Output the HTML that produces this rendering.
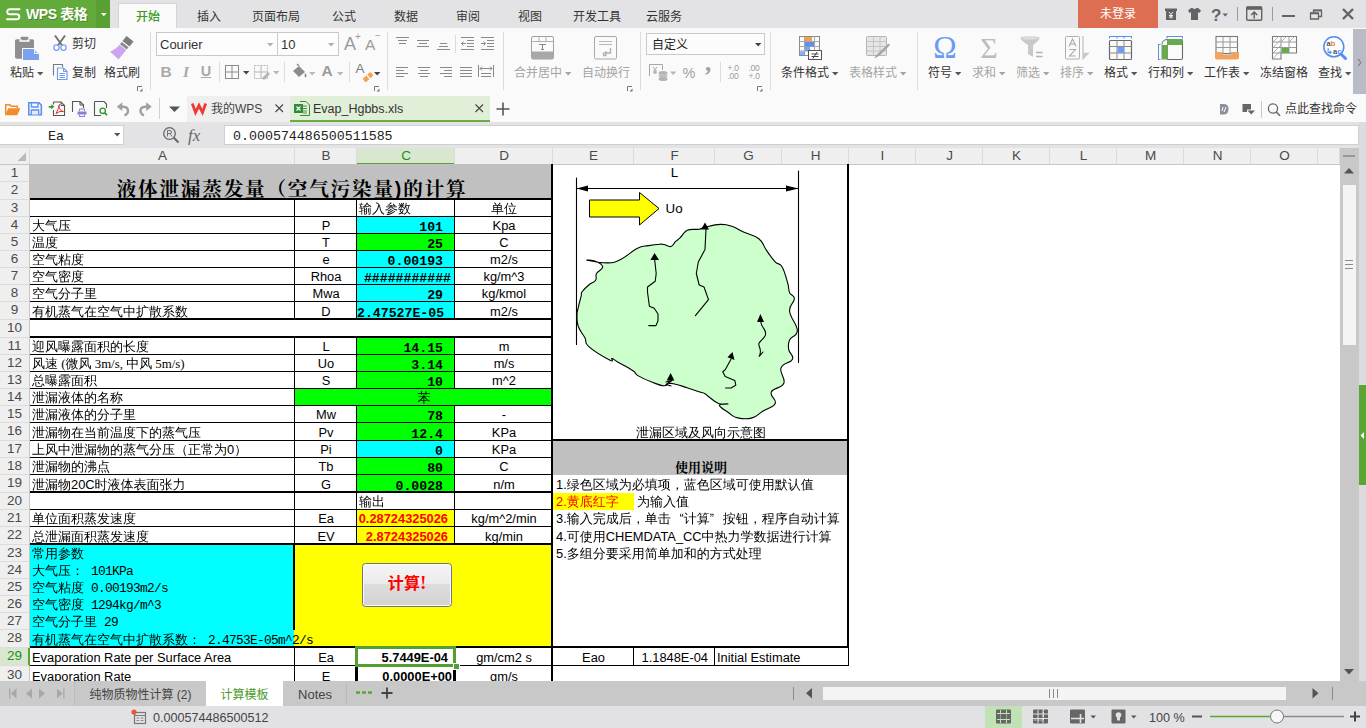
<!DOCTYPE html>
<html lang="zh"><head><meta charset="utf-8"><title>WPS 表格 - Evap_Hgbbs.xls</title>
<style>
html,body{margin:0;padding:0;}
body{width:1366px;height:728px;position:relative;overflow:hidden;background:#fff;font-family:"Liberation Sans","Noto Sans CJK SC",sans-serif;font-size:13px;color:#333;}
div,svg{position:absolute;box-sizing:border-box;}
svg{overflow:visible;}
.t{white-space:nowrap;}
</style></head><body>

<div style="left:0px;top:0px;width:1366px;height:28px;background:#e3e3e5;"></div>
<div style="left:0px;top:0px;width:96px;height:28px;background:#62ab3a;"></div>
<div style="left:96px;top:0px;width:14px;height:28px;background:#59a034;"></div>
<svg style="left:6px;top:8px" width="15" height="13" viewBox="0 0 15 13"><path d="M13.500 1.200H3.800Q1.200 1.200 1.200 3.700Q1.200 6.200 3.800 6.200H10.800Q13.300 6.200 13.300 8.700Q13.300 11.200 10.800 11.200H1" fill="none" stroke="#fff" stroke-width="1.900" stroke-linecap="round"/></svg>
<div style="left:26px;top:0px;width:70px;height:28px;line-height:28px;font-size:14px;color:#fff;text-align:left;white-space:nowrap;font-family:'Liberation Sans','Noto Sans CJK SC',sans-serif;font-weight:bold;letter-spacing:-0.4px;text-shadow:1px 1px 0 rgba(0,0,0,.22);">WPS 表格</div>
<svg style="left:101px;top:13px" width="6" height="4"><path d="M0 0H5.600L2.800 3.300Z" fill="#fff"/></svg>
<div style="left:118px;top:3px;width:59px;height:25px;background:#fafafa;border:1px solid #d4d4d6;border-bottom:none;"></div>
<div style="left:108px;top:4px;width:80px;height:26px;line-height:27px;font-size:12px;color:#3a9a1c;text-align:center;white-space:nowrap;font-family:'Liberation Sans','Noto Sans CJK SC',sans-serif;font-weight:500;">开始</div>
<div style="left:169px;top:4px;width:80px;height:26px;line-height:27px;font-size:12px;color:#333;text-align:center;white-space:nowrap;font-family:'Liberation Sans','Noto Sans CJK SC',sans-serif;">插入</div>
<div style="left:236px;top:4px;width:80px;height:26px;line-height:27px;font-size:12px;color:#333;text-align:center;white-space:nowrap;font-family:'Liberation Sans','Noto Sans CJK SC',sans-serif;">页面布局</div>
<div style="left:304px;top:4px;width:80px;height:26px;line-height:27px;font-size:12px;color:#333;text-align:center;white-space:nowrap;font-family:'Liberation Sans','Noto Sans CJK SC',sans-serif;">公式</div>
<div style="left:366px;top:4px;width:80px;height:26px;line-height:27px;font-size:12px;color:#333;text-align:center;white-space:nowrap;font-family:'Liberation Sans','Noto Sans CJK SC',sans-serif;">数据</div>
<div style="left:428px;top:4px;width:80px;height:26px;line-height:27px;font-size:12px;color:#333;text-align:center;white-space:nowrap;font-family:'Liberation Sans','Noto Sans CJK SC',sans-serif;">审阅</div>
<div style="left:490px;top:4px;width:80px;height:26px;line-height:27px;font-size:12px;color:#333;text-align:center;white-space:nowrap;font-family:'Liberation Sans','Noto Sans CJK SC',sans-serif;">视图</div>
<div style="left:557px;top:4px;width:80px;height:26px;line-height:27px;font-size:12px;color:#333;text-align:center;white-space:nowrap;font-family:'Liberation Sans','Noto Sans CJK SC',sans-serif;">开发工具</div>
<div style="left:624px;top:4px;width:80px;height:26px;line-height:27px;font-size:12px;color:#333;text-align:center;white-space:nowrap;font-family:'Liberation Sans','Noto Sans CJK SC',sans-serif;">云服务</div>
<div style="left:1078px;top:0px;width:80px;height:28px;background:#de6e51;"></div>
<div style="left:1078px;top:0px;width:80px;height:28px;line-height:28px;font-size:12px;color:#fff;text-align:center;white-space:nowrap;font-family:'Liberation Sans','Noto Sans CJK SC',sans-serif;">未登录</div>
<svg style="left:1160px;top:0" width="206" height="28" viewBox="1160 0 206 28" fill="none" stroke="#636363">
<path d="M1165 8.5H1177V11H1176V20H1166V11H1165Z" fill="#636363" stroke="none"/>
<path d="M1169 12L1171 14.5L1173 12M1171 14.5V18.5M1169 15.5H1173M1169 17H1173" stroke="#fff" stroke-width="0.9"/>
<path d="M1191 8L1188 10.5L1189.5 13L1191 12V20H1198V12L1199.5 13L1201 10.5L1198 8H1196.5Q1194.5 10 1192.5 8Z" fill="#636363" stroke="none"/>
<text x="1211" y="21" font-family="Liberation Sans,sans-serif" font-size="17" font-weight="bold" fill="#636363" stroke="none">?</text>
<path d="M1222.5 13.5H1228L1225.2 16.5Z" fill="#636363" stroke="none"/>
<path d="M1237.5 7V21M1272.5 7V21" stroke="#9a9a9c" stroke-width="1"/>
<rect x="1246.700" y="7" width="15" height="13.300" rx="1" stroke-width="1.400"/><path d="M1246.500 8.200H1262" stroke-width="3.200"/><path d="M1254.200 18.500V12.500M1251.200 15L1254.200 12L1257.200 15" stroke-width="1.500"/>
<path d="M1282 16H1295" stroke-width="2"/>
<path d="M1310.5 13.5H1318.5V19H1310.5ZM1313.5 13V10.5H1321.5V16.5H1319" stroke-width="1.3"/><path d="M1310 13.2H1319M1313 10.3H1322" stroke-width="1.8"/>
<path d="M1343 9L1353 19M1353 9L1343 19" stroke-width="2.400"/>
</svg>
<div style="left:0px;top:28px;width:1366px;height:94px;background:#fafafa;"></div>
<svg style="left:14px;top:36px" width="26" height="25" viewBox="0 0 26 25">
<path d="M1 4.800Q1 3.200 2.600 3.200H6.500V2Q6.500 0.800 7.700 0.800H13.300Q14.500 0.800 14.500 2V3.200H18.400Q20 3.200 20 4.800V12H8V22.700H2.600Q1 22.700 1 21.100Z" fill="#8f8f8f"/>
<rect x="5.500" y="3.200" width="10" height="2.600" fill="#fafafa"/><rect x="7.500" y="1.600" width="6" height="2.600" fill="#8f8f8f"/>
<path d="M9 13H20L25 18V24H9Z" fill="#7aa2ef"/><path d="M20 13V18H25Z" fill="#fafafa"/><path d="M20.800 14.800V17.200H23.200Z" fill="#7aa2ef"/>
</svg>
<div style="left:0.0px;top:63px;width:44px;height:20px;line-height:20px;font-size:12px;color:#333;text-align:center;white-space:nowrap;font-family:'Liberation Sans','Noto Sans CJK SC',sans-serif;">粘贴</div>
<svg style="left:37.0px;top:72px" width="7" height="4"><path d="M0 0H6.4L3.2 3.6Z" fill="#555"/></svg>
<svg style="left:52px;top:35px" width="16" height="17" viewBox="0 0 16 17" fill="none">
<path d="M3 0.500L10.300 10.800M13 0.500L5.700 10.800" stroke="#707070" stroke-width="1.900"/>
<circle cx="4.500" cy="12.600" r="2.700" stroke="#7aa2ef" stroke-width="1.300"/><circle cx="11.500" cy="12.600" r="2.700" stroke="#7aa2ef" stroke-width="1.300"/></svg>
<div style="left:72px;top:34px;width:30px;height:20px;line-height:20px;font-size:12px;color:#333;text-align:left;white-space:nowrap;font-family:'Liberation Sans','Noto Sans CJK SC',sans-serif;">剪切</div>
<svg style="left:53px;top:64px" width="15" height="17" viewBox="0 0 15 17" fill="none">
<path d="M0.500 11.500V0.500H9.500V3" stroke="#7a7a7a" stroke-width="1.100"/>
<path d="M4.500 4H10.500L14 7.500V15.500H4.500Z" fill="#fff" stroke="#6f9bf0" stroke-width="1.200"/><path d="M10.500 4V7.500H14" stroke="#6f9bf0" stroke-width="1"/><path d="M6.500 9.500H12M6.500 11.500H12M6.500 13.500H12" stroke="#6f9bf0" stroke-width="1"/></svg>
<div style="left:72px;top:63px;width:30px;height:20px;line-height:20px;font-size:12px;color:#333;text-align:left;white-space:nowrap;font-family:'Liberation Sans','Noto Sans CJK SC',sans-serif;">复制</div>
<svg style="left:109px;top:35px" width="26" height="25" viewBox="0 0 26 25">
<path d="M17.5 1L24.5 6.5L20.5 11.5L13.5 6Z" fill="#7c7c7c"/><path d="M12.8 7L19.5 12.3L17.8 14.5L11 9.2Z" fill="#8a8a8a"/>
<path d="M10.5 9.8L17.2 15L9.5 24.5L1 16.5Q6 15 10.5 9.8Z" fill="#cda4ef"/></svg>
<div style="left:94.0px;top:63px;width:56px;height:20px;line-height:20px;font-size:12px;color:#333;text-align:center;white-space:nowrap;font-family:'Liberation Sans','Noto Sans CJK SC',sans-serif;">格式刷</div>
<svg style="left:137px;top:86px" width="6" height="6"><path d="M0.5 5V0.5H5" fill="none" stroke="#777" stroke-width="1"/><path d="M5.5 2.5V5.5H2.5Z" fill="#777"/></svg>
<div style="left:150px;top:32px;width:1px;height:58px;background:#dcdcdc;"></div>
<div style="left:156px;top:32px;width:183px;height:24px;background:#fdfdfd;border:1px solid #c9c9c9;"></div>
<div style="left:277px;top:33px;width:1px;height:22px;background:#c9c9c9;"></div>
<div style="left:160px;top:33px;width:100px;height:23px;line-height:24px;font-size:13px;color:#333;text-align:left;white-space:nowrap;font-family:'Liberation Sans','Noto Sans CJK SC',sans-serif;">Courier</div>
<div style="left:281px;top:33px;width:40px;height:23px;line-height:24px;font-size:13px;color:#333;text-align:left;white-space:nowrap;font-family:'Liberation Sans','Noto Sans CJK SC',sans-serif;">10</div>
<svg style="left:267px;top:43px" width="7" height="4"><path d="M0 0H6.4L3.2 3.6Z" fill="#b0b0b0"/></svg>
<svg style="left:328px;top:43px" width="7" height="4"><path d="M0 0H6.4L3.2 3.6Z" fill="#b0b0b0"/></svg>
<div style="left:344px;top:34px;width:14px;height:20px;line-height:20px;font-size:18px;color:#9a9a9a;text-align:left;white-space:nowrap;font-family:'Liberation Sans','Noto Sans CJK SC',sans-serif;">A</div>
<div style="left:355px;top:32px;width:8px;height:10px;line-height:10px;font-size:10px;color:#9a9a9a;text-align:left;white-space:nowrap;font-family:'Liberation Sans','Noto Sans CJK SC',sans-serif;">+</div>
<div style="left:365px;top:36px;width:14px;height:18px;line-height:18px;font-size:15.5px;color:#9a9a9a;text-align:left;white-space:nowrap;font-family:'Liberation Sans','Noto Sans CJK SC',sans-serif;">A</div>
<div style="left:375px;top:31px;width:8px;height:10px;line-height:10px;font-size:10px;color:#9a9a9a;text-align:left;white-space:nowrap;font-family:'Liberation Sans','Noto Sans CJK SC',sans-serif;">−</div>
<div style="left:159px;top:62px;width:14px;height:20px;line-height:20px;font-size:15.5px;color:#a9a9a9;text-align:center;white-space:nowrap;font-family:'Liberation Sans','Noto Sans CJK SC',sans-serif;font-weight:bold;">B</div>
<div style="left:179px;top:62px;width:14px;height:20px;line-height:20px;font-size:15.5px;color:#a9a9a9;text-align:center;white-space:nowrap;font-family:'Liberation Serif',serif;font-weight:bold;font-style:italic;">I</div>
<div style="left:199px;top:62px;width:14px;height:20px;line-height:18px;font-size:14.5px;color:#a9a9a9;text-align:center;white-space:nowrap;font-family:'Liberation Sans','Noto Sans CJK SC',sans-serif;font-weight:bold;text-decoration:underline;">U</div>
<div style="left:219px;top:62px;width:1px;height:20px;background:#dcdcdc;"></div>
<svg style="left:225px;top:65px" width="60" height="15" viewBox="0 0 60 15" fill="none">
<rect x="0.5" y="0.5" width="13" height="13" stroke="#8c8c8c"/><path d="M7 0.5V13.5M0.5 7H13.5" stroke="#8c8c8c"/>
<path d="M18 6H24.4L21.2 9.6Z" fill="#444"/>
<rect x="29.5" y="0.5" width="13" height="13" stroke="#b4b4b4" stroke-dasharray="2 1"/><path d="M36 0.5V13.5M29.5 7H42.5" stroke="#b4b4b4"/><path d="M37 13L43 7L45 9L39 15Z" fill="#b4b4b4"/>
<path d="M48 6H54.4L51.2 9.6Z" fill="#b8b8b8"/></svg>
<div style="left:284px;top:62px;width:1px;height:20px;background:#dcdcdc;"></div>
<svg style="left:290px;top:63px" width="95" height="20" viewBox="0 0 95 20" fill="none">
<path d="M3 8L9 3L15 9L9 14Z" fill="#8c8c8c"/><path d="M9 3L7 1" stroke="#8c8c8c" stroke-width="1.4"/><path d="M15.5 10Q17.5 13 15.5 14.5Q13.5 13 15.5 10Z" fill="#8c8c8c"/>
<path d="M19 9H25.4L22.2 12.6Z" fill="#b8b8b8"/>
<path d="M47 9H53.4L50.2 12.6Z" fill="#b8b8b8"/>
<path d="M73.500 15L79.500 9.500Q80.500 8.800 81.300 9.700L82.800 11.500Q83.500 12.500 82.600 13.300L76.500 18.800Q75.600 19.500 74.800 18.600L73.300 16.800Q72.600 15.800 73.500 15Z" fill="#f2a356"/><path d="M76.800 12L80 15.800" stroke="#fff" stroke-width="1.200"/>
<path d="M84 9H90.4L87.2 12.6Z" fill="#444"/></svg>
<div style="left:319px;top:61px;width:16px;height:20px;line-height:20px;font-size:15.5px;color:#9a9a9a;text-align:center;white-space:nowrap;font-family:'Liberation Sans','Noto Sans CJK SC',sans-serif;font-weight:bold;">A</div>
<div style="left:349px;top:62px;width:1px;height:20px;background:#dcdcdc;"></div>
<div style="left:353px;top:59px;width:14px;height:20px;line-height:20px;font-size:13.5px;color:#7d7d7d;text-align:center;white-space:nowrap;font-family:'Liberation Sans','Noto Sans CJK SC',sans-serif;">A</div>
<svg style="left:374px;top:86px" width="6" height="6"><path d="M0.5 5V0.5H5" fill="none" stroke="#777" stroke-width="1"/><path d="M5.5 2.5V5.5H2.5Z" fill="#777"/></svg>
<div style="left:387px;top:32px;width:1px;height:58px;background:#dcdcdc;"></div>
<svg style="left:396px;top:37px" width="18" height="14"><path d="M0 0.5H13M2 3.5H11M3 6.5H10" stroke="#8a8a8a" stroke-width="1" fill="none"/></svg>
<svg style="left:417px;top:40px" width="18" height="14"><path d="M0 0.5H12M2 3.5H10M0 6.5H12" stroke="#8a8a8a" stroke-width="1" fill="none"/></svg>
<svg style="left:437px;top:43px" width="18" height="14"><path d="M3 0.5H10M2 3.5H11M0 6.5H13" stroke="#8a8a8a" stroke-width="1" fill="none"/></svg>
<div style="left:455px;top:35px;width:1px;height:18px;background:#dcdcdc;"></div>
<svg style="left:461px;top:37px" width="34" height="14" fill="none" stroke="#8a8a8a">
<path d="M0 0.5H13M6 3.5H13M6 6.5H13M6 9.5H13M0 12.5H13M5 6.5H0.5M2.5 4.5L0.5 6.5L2.5 8.5"/>
<path d="M20 0.5H33M26 3.5H33M26 6.5H33M26 9.5H33M20 12.5H33M20 6.5H24.5M22.5 4.5L24.5 6.5L22.5 8.5"/></svg>
<svg style="left:396px;top:67px" width="18" height="14"><path d="M0 0.5H12M0 3.5H8M0 6.5H12M0 9.5H8" stroke="#8a8a8a" stroke-width="1" fill="none"/></svg>
<svg style="left:418px;top:67px" width="18" height="14"><path d="M0 0.5H12M2 3.5H10M0 6.5H12M2 9.5H10" stroke="#8a8a8a" stroke-width="1" fill="none"/></svg>
<svg style="left:440px;top:67px" width="18" height="14"><path d="M0 0.5H12M4 3.5H12M0 6.5H12M4 9.5H12" stroke="#8a8a8a" stroke-width="1" fill="none"/></svg>
<svg style="left:460px;top:67px" width="18" height="14"><path d="M0 0.5H12M0 3.5H12M0 6.5H12M0 9.5H12" stroke="#8a8a8a" stroke-width="1" fill="none"/></svg>
<svg style="left:478px;top:65px" width="17" height="13" fill="none" stroke="#8a8a8a"><path d="M0.5 0V12M15.5 0V12M2 3.5H14M4 1.5L2 3.5L4 5.5M12 1.5L14 3.5L12 5.5M3 8.5H13M3 11.5H13"/></svg>
<div style="left:503px;top:32px;width:1px;height:58px;background:#dcdcdc;"></div>
<svg style="left:531px;top:36px" width="23" height="24" viewBox="0 0 23 24" fill="none">
<rect x="0.5" y="0.5" width="22" height="22.5" rx="1.5" stroke="#a0a0a0"/><path d="M0.5 5.5H22.5M8 0.5V5.5M15 0.5V5.5" stroke="#b0b0b0"/>
<path d="M0.5 15.5H22.5V21.5Q22.5 23 21 23H2Q0.5 23 0.5 21.5Z" fill="#a8a8a8"/>
<path d="M8 8.5H15M11.5 8.5V13.5M10 13.5H13" stroke="#8a8a8a"/></svg>
<div style="left:504.0px;top:63px;width:68px;height:20px;line-height:20px;font-size:12px;color:#a4a4a4;text-align:center;white-space:nowrap;font-family:'Liberation Sans','Noto Sans CJK SC',sans-serif;">合并居中</div>
<svg style="left:565.0px;top:72px" width="7" height="4"><path d="M0 0H6.4L3.2 3.6Z" fill="#a4a4a4"/></svg>
<svg style="left:594px;top:36px" width="23" height="24" viewBox="0 0 23 24" fill="none">
<rect x="0.5" y="0.5" width="22" height="22.5" rx="1.5" stroke="#a8a8a8"/><path d="M5 5.5H18M5 8.5H18" stroke="#b8b8b8"/>
<path d="M16.5 12V17H9.5M12 15V19.5H9.5V17" stroke="#b0b0b0" stroke-width="1.3"/></svg>
<div style="left:572.0px;top:63px;width:68px;height:20px;line-height:20px;font-size:12px;color:#a4a4a4;text-align:center;white-space:nowrap;font-family:'Liberation Sans','Noto Sans CJK SC',sans-serif;">自动换行</div>
<svg style="left:627px;top:86px" width="6" height="6"><path d="M0.5 5V0.5H5" fill="none" stroke="#777" stroke-width="1"/><path d="M5.5 2.5V5.5H2.5Z" fill="#777"/></svg>
<div style="left:640px;top:32px;width:1px;height:58px;background:#dcdcdc;"></div>
<div style="left:646px;top:33px;width:119px;height:22px;background:#fcfcfc;border:1px solid #c9c9c9;"></div>
<div style="left:652px;top:33px;width:60px;height:22px;line-height:25px;font-size:12px;color:#222;text-align:left;white-space:nowrap;font-family:'Liberation Sans','Noto Sans CJK SC',sans-serif;">自定义</div>
<svg style="left:755px;top:43px" width="7" height="4"><path d="M0 0H6.4L3.2 3.6Z" fill="#444"/></svg>
<svg style="left:649px;top:64px" width="115" height="18" viewBox="0 0 115 18" fill="none">
<path d="M0.5 12V0.5H13.5V6" stroke="#a8a8a8"/><path d="M4 3L6 5.5L8 3M6 5.5V10M4 7H8M4 8.8H8" stroke="#a0a0a0" stroke-width="0.9"/>
<ellipse cx="14" cy="9" rx="4.5" ry="2" fill="#b4b4b4"/><ellipse cx="14" cy="12" rx="4.5" ry="2" fill="#c0c0c0"/><ellipse cx="14" cy="15" rx="4.5" ry="2" fill="#b4b4b4"/>
<path d="M21 7.5H27.4L24.2 11.1Z" fill="#b8b8b8"/>
</svg>
<div style="left:682px;top:63px;width:14px;height:20px;line-height:20px;font-size:14.5px;color:#a0a0a0;text-align:center;white-space:nowrap;font-family:'Liberation Sans','Noto Sans CJK SC',sans-serif;">%</div>
<div style="left:702px;top:51px;width:12px;height:24px;line-height:24px;font-size:25px;color:#a0a0a0;text-align:center;white-space:nowrap;font-family:'Liberation Serif',serif;font-weight:bold;">,</div>
<div style="left:720px;top:62px;width:1px;height:20px;background:#dcdcdc;"></div>
<div style="left:725px;top:63px;width:16px;height:10px;line-height:10px;font-size:8.5px;color:#9a9a9a;text-align:center;white-space:nowrap;font-family:'Liberation Sans','Noto Sans CJK SC',sans-serif;letter-spacing:-0.3px;">+.0</div>
<div style="left:725px;top:71px;width:16px;height:10px;line-height:10px;font-size:8.5px;color:#9a9a9a;text-align:center;white-space:nowrap;font-family:'Liberation Sans','Noto Sans CJK SC',sans-serif;letter-spacing:-0.3px;">.00</div>
<div style="left:746px;top:63px;width:16px;height:10px;line-height:10px;font-size:8.5px;color:#9a9a9a;text-align:center;white-space:nowrap;font-family:'Liberation Sans','Noto Sans CJK SC',sans-serif;letter-spacing:-0.3px;">.00</div>
<div style="left:746px;top:71px;width:16px;height:10px;line-height:10px;font-size:8.5px;color:#9a9a9a;text-align:center;white-space:nowrap;font-family:'Liberation Sans','Noto Sans CJK SC',sans-serif;letter-spacing:-0.3px;">+.0</div>
<svg style="left:757px;top:86px" width="6" height="6"><path d="M0.5 5V0.5H5" fill="none" stroke="#777" stroke-width="1"/><path d="M5.5 2.5V5.5H2.5Z" fill="#777"/></svg>
<div style="left:770px;top:32px;width:1px;height:58px;background:#dcdcdc;"></div>
<svg style="left:799px;top:36px" width="23" height="24" viewBox="0 0 23 24" fill="none">
<rect x="0.5" y="0.5" width="20" height="19" stroke="#8a8a8a"/><path d="M0.5 5.5H20.5M0.5 10.5H20.5M0.5 15H20.5M5.5 0.5V19.5M15.5 0.5V19.5" stroke="#a8a8a8"/>
<rect x="6" y="1" width="7" height="4.5" fill="#f0a050"/><rect x="6" y="6" width="9" height="4.5" fill="#5b8ff0"/><rect x="6" y="11" width="5" height="4" fill="#5b8ff0" opacity=".8"/><rect x="1" y="15.5" width="4.5" height="4" fill="#5b8ff0" opacity=".7"/>
<rect x="9.5" y="14.5" width="13" height="9" fill="#fff" stroke="#555"/><path d="M12.5 18H19.5M12.5 20.5H19.5M18 16L14 22.5" stroke="#444"/></svg>
<div style="left:771.0px;top:63px;width:68px;height:20px;line-height:20px;font-size:12px;color:#333;text-align:center;white-space:nowrap;font-family:'Liberation Sans','Noto Sans CJK SC',sans-serif;">条件格式</div>
<svg style="left:832.0px;top:72px" width="7" height="4"><path d="M0 0H6.4L3.2 3.6Z" fill="#555"/></svg>
<svg style="left:866px;top:36px" width="24" height="24" viewBox="0 0 24 24" fill="none">
<rect x="0.5" y="0.5" width="20" height="19" rx="1" fill="#e6e6e6" stroke="#b4b4b4"/><path d="M0.5 5.5H20.5M0.5 10.5H20.5M0.5 15H20.5M7.5 0.5V19.5M14 0.5V19.5" stroke="#c4c4c4"/>
<path d="M22.5 7.5L24 9L15 18Q12 21 8 22.5Q10 19 13 16.5Z" fill="#a4a4a4"/></svg>
<div style="left:839.0px;top:63px;width:68px;height:20px;line-height:20px;font-size:12px;color:#a4a4a4;text-align:center;white-space:nowrap;font-family:'Liberation Sans','Noto Sans CJK SC',sans-serif;">表格样式</div>
<svg style="left:900.0px;top:72px" width="7" height="4"><path d="M0 0H6.4L3.2 3.6Z" fill="#a4a4a4"/></svg>
<div style="left:917px;top:32px;width:1px;height:58px;background:#dcdcdc;"></div>
<div style="left:930px;top:28px;width:30px;height:36px;line-height:39px;font-size:31.5px;color:#6a9bf4;text-align:center;white-space:nowrap;font-family:'Liberation Serif',serif;">Ω</div>
<div style="left:918.0px;top:63px;width:44px;height:20px;line-height:20px;font-size:12px;color:#333;text-align:center;white-space:nowrap;font-family:'Liberation Sans','Noto Sans CJK SC',sans-serif;">符号</div>
<svg style="left:955.0px;top:72px" width="7" height="4"><path d="M0 0H6.4L3.2 3.6Z" fill="#555"/></svg>
<div style="left:976px;top:28px;width:26px;height:36px;line-height:40px;font-size:30px;color:#bdbdbd;text-align:center;white-space:nowrap;font-family:'Liberation Serif',serif;">Σ</div>
<div style="left:962.0px;top:63px;width:44px;height:20px;line-height:20px;font-size:12px;color:#a4a4a4;text-align:center;white-space:nowrap;font-family:'Liberation Sans','Noto Sans CJK SC',sans-serif;">求和</div>
<svg style="left:999.0px;top:72px" width="7" height="4"><path d="M0 0H6.4L3.2 3.6Z" fill="#a4a4a4"/></svg>
<svg style="left:1020px;top:36px" width="24" height="24" viewBox="0 0 24 24"><path d="M0.5 2Q0.5 0.5 5 0.5H15Q19.5 0.5 19.5 2Q19.5 4 13 9V21L8 18V9Q0.5 4 0.5 2Z" fill="#c8c8c8"/><ellipse cx="10" cy="2.2" rx="8.5" ry="1.4" fill="#dcdcdc"/><path d="M16 16.5H22.5M16 20.5H22.5" stroke="#b4b4b4" stroke-width="1.6"/></svg>
<div style="left:1006.0px;top:63px;width:44px;height:20px;line-height:20px;font-size:12px;color:#a4a4a4;text-align:center;white-space:nowrap;font-family:'Liberation Sans','Noto Sans CJK SC',sans-serif;">筛选</div>
<svg style="left:1043.0px;top:72px" width="7" height="4"><path d="M0 0H6.4L3.2 3.6Z" fill="#a4a4a4"/></svg>
<svg style="left:1065px;top:36px" width="24" height="24" viewBox="0 0 24 24" fill="none"><rect x="0.5" y="0.5" width="14" height="22.5" rx="1" stroke="#b0b0b0"/><path d="M4 10.5L7.5 3L11 10.5M5.2 8H9.8M4.5 13.5H10.5L4.5 20H10.5" stroke="#a8a8a8" stroke-width="1.1"/><path d="M18 0V22.5L23 17.5H18" fill="#c8c8c8" stroke="#c8c8c8" stroke-width="1.4"/></svg>
<div style="left:1050.0px;top:63px;width:44px;height:20px;line-height:20px;font-size:12px;color:#a4a4a4;text-align:center;white-space:nowrap;font-family:'Liberation Sans','Noto Sans CJK SC',sans-serif;">排序</div>
<svg style="left:1087.0px;top:72px" width="7" height="4"><path d="M0 0H6.4L3.2 3.6Z" fill="#a4a4a4"/></svg>
<svg style="left:1109px;top:36px" width="24" height="24" viewBox="0 0 24 24" fill="none"><path d="M0.5 0.5H22.5M0.5 0V2.5M8 0V2.5M15 0V2.5M22.5 0V2.5" stroke="#5b8ff0"/><rect x="0.5" y="4.5" width="22" height="19" rx="1" stroke="#6a6a6a" stroke-width="1.2"/><path d="M0.5 10.5H22.5M0.5 17H22.5M8 4.5V23.5M15 4.5V23.5" stroke="#8a8a8a"/><rect x="8.5" y="11" width="6.5" height="6" fill="#6d9df5"/></svg>
<div style="left:1094.0px;top:63px;width:44px;height:20px;line-height:20px;font-size:12px;color:#333;text-align:center;white-space:nowrap;font-family:'Liberation Sans','Noto Sans CJK SC',sans-serif;">格式</div>
<svg style="left:1131.0px;top:72px" width="7" height="4"><path d="M0 0H6.4L3.2 3.6Z" fill="#555"/></svg>
<svg style="left:1158px;top:36px" width="26" height="24" viewBox="0 0 26 24" fill="none"><path d="M9 0.5H24.5M9 0V2.5M24.5 0V2.5" stroke="#5b8ff0"/><path d="M0.5 8.5V23.5M0 8.5H2.5M0 23.5H2.5" stroke="#5b8ff0"/><path d="M9 3.5H23Q24.5 3.5 24.5 5V22Q24.5 23.5 23 23.5H9" stroke="#6a6a6a" stroke-width="1.1"/><path d="M9 3H24.5V9H9ZM3.5 9H10V23.5H3.5Z" fill="#6aa84f"/><path d="M4 8.5Q4 4 9 3.5" stroke="#6a6a6a"/></svg>
<div style="left:1138.0px;top:63px;width:56px;height:20px;line-height:20px;font-size:12px;color:#333;text-align:center;white-space:nowrap;font-family:'Liberation Sans','Noto Sans CJK SC',sans-serif;">行和列</div>
<svg style="left:1187.0px;top:72px" width="7" height="4"><path d="M0 0H6.4L3.2 3.6Z" fill="#555"/></svg>
<svg style="left:1215px;top:36px" width="24" height="24" viewBox="0 0 24 24" fill="none"><rect x="1" y="0.5" width="21.5" height="17" stroke="#7a7a7a" stroke-width="1.1"/><path d="M1 6H22.5M1 11.5H22.5M8 0.5V17M15 0.5V17" stroke="#9a9a9a"/><path d="M0 16H8V18.5H16V16H24V21.5Q24 23.5 22 23.5H2Q0 23.5 0 21.5Z" fill="#f0a263"/></svg>
<div style="left:1194.0px;top:63px;width:56px;height:20px;line-height:20px;font-size:12px;color:#333;text-align:center;white-space:nowrap;font-family:'Liberation Sans','Noto Sans CJK SC',sans-serif;">工作表</div>
<svg style="left:1243.0px;top:72px" width="7" height="4"><path d="M0 0H6.4L3.2 3.6Z" fill="#555"/></svg>
<svg style="left:1272px;top:36px" width="25" height="24" viewBox="0 0 25 24" fill="none"><path d="M0.5 0.5H24.5V17H9V23H0.5Z" stroke="#7a7a7a" stroke-width="1.1" fill="#fff"/><path d="M0.5 6H24.5M0.5 11.5H24.5M0.5 17H9M9 0.5V17M17 0.5V17" stroke="#9a9a9a"/><path d="M1 6L6.5 0.5M1 11.5L9 3.5M1 17L9 9M1 22.5L9 14.5M9 6L14.5 0.5M17 6L22.5 0.5" stroke="#a4a4a4" stroke-width="0.9"/><rect x="9.5" y="12" width="7.5" height="5" fill="#6aa84f"/></svg>
<div style="left:1250.0px;top:63px;width:68px;height:20px;line-height:20px;font-size:12px;color:#333;text-align:center;white-space:nowrap;font-family:'Liberation Sans','Noto Sans CJK SC',sans-serif;">冻结窗格</div>
<svg style="left:1323px;top:36px" width="26" height="25" viewBox="0 0 26 25" fill="none"><circle cx="10.8" cy="10.8" r="10" stroke="#4f8ef2" stroke-width="1.5" fill="#fff"/><path d="M18.500 18.500L22.500 22.500" stroke="#4f8ef2" stroke-width="3" stroke-linecap="round"/>
<text x="3.5" y="10" font-family="Liberation Sans,sans-serif" font-size="7.5" font-weight="bold" fill="#555" stroke="none">a<tspan fill="#f08030">b</tspan></text><text x="3" y="17.5" font-family="Liberation Sans,sans-serif" font-size="7.5" font-weight="bold" fill="#4f8ef2" stroke="none">↳<tspan fill="#555">a</tspan>c</text></svg>
<div style="left:1308.0px;top:63px;width:44px;height:20px;line-height:20px;font-size:12px;color:#333;text-align:center;white-space:nowrap;font-family:'Liberation Sans','Noto Sans CJK SC',sans-serif;">查找</div>
<svg style="left:1345.0px;top:72px" width="7" height="4"><path d="M0 0H6.4L3.2 3.6Z" fill="#555"/></svg>
<div style="left:1353px;top:29px;width:13px;height:65px;background:#b9bcc6;"></div>
<svg style="left:1357px;top:58px" width="6" height="9"><path d="M1 1L4 4.500L1 8" fill="none" stroke="#666" stroke-width="1"/></svg>
<svg style="left:0;top:95px" width="190" height="27" viewBox="0 95 190 27" fill="none">
<path d="M5.700 114.500V104.700H9.800L11.200 106.300H17.300V108.200" stroke="#f28c28" stroke-width="1.500"/><path d="M5 115.300L8.300 108.300H20.400L17.200 115.300Z" fill="#f28c28"/>
<path d="M28.800 102.800H39L41.300 105V114.700H28.800Z" stroke="#5b8ff0" stroke-width="1.600"/><path d="M31.500 103V107H38V103" stroke="#5b8ff0" stroke-width="1.300"/><path d="M31.300 114.500V110H38.700V114.500" fill="#e4ecfc" stroke="#5b8ff0" stroke-width="1.300"/>
<path d="M53.500 102H61L64.500 105.500V115.500H53.500V110M53.500 104.500V102" stroke="#555" stroke-width="1.100"/><path d="M61 102V105.500H64.500" stroke="#555"/><path d="M48.800 105.900H51.300V104.300L54.400 106.800L51.300 109.300V107.700H48.800Z" fill="#2e9a2e"/><path d="M56 113.5Q59 108 59.5 104.5Q58 106 59.5 108.5Q61 111.5 63.5 111.5Q60 110.5 56 113.5Z" stroke="#e03030" stroke-width="1"/>
<path d="M72.500 112V101.500H80L83.500 105V108" stroke="#555" stroke-width="1.1"/><path d="M80 101.500V105H83.500" stroke="#555"/><path d="M77.500 111.500H86.500V114.500H77.500Z" fill="#8a7fd6"/><path d="M79.500 111V109H84.500V111M79.500 114.500V116.500H84.500V114.500" stroke="#8a7fd6" stroke-width="1"/>
<path d="M94.500 101.500H104L106.500 104V108M94.500 101.500V115.500H101" stroke="#555" stroke-width="1.1"/><circle cx="102.700" cy="110.800" r="2.700" stroke="#2e9a2e" stroke-width="1.300"/><path d="M104.700 112.800L107 115.200" stroke="#2e9a2e" stroke-width="1.800"/>
<path d="M120 106.700H123.500Q128 107 128 111Q128 114 124.500 115.300" stroke="#a0a0a0" stroke-width="2.400"/><path d="M116.800 106.700L122.300 102.300V111Z" fill="#a0a0a0"/>
<path d="M148.500 106.700H145Q140.500 107 140.500 111Q140.500 114 144 115.300" stroke="#a0a0a0" stroke-width="2.400"/><path d="M151.700 106.700L146.200 102.300V111Z" fill="#a0a0a0"/>
<path d="M159.500 98V119" stroke="#d0d0d0"/>
<path d="M169 106.500H180L174.500 112Z" fill="#555"/>
</svg>
<div style="left:187px;top:96px;width:103px;height:26px;background:#efeff0;"></div>
<svg style="left:191px;top:102px" width="16" height="13" viewBox="0 0 16 13"><path d="M1.300 1.500L4.500 10.500L8 3.500L11.500 10.500L14.700 1.500" fill="none" stroke="#ee3a30" stroke-width="2.800" stroke-linejoin="miter"/></svg>
<div style="left:211px;top:96px;width:60px;height:26px;line-height:26px;font-size:12px;color:#444;text-align:left;white-space:nowrap;font-family:'Liberation Sans','Noto Sans CJK SC',sans-serif;">我的WPS</div>
<svg style="left:275px;top:104px" width="9" height="9"><path d="M0.5 0.5L8 8M8 0.5L0.5 8" stroke="#444" stroke-width="1.1"/></svg>
<div style="left:290px;top:96px;width:200px;height:26px;background:#e1efd8;border-bottom:2px solid #68ae44;"></div>
<svg style="left:294px;top:101px" width="16" height="15" viewBox="0 0 16 15" fill="none"><path d="M6 0.500H12L15.500 4V14.500H6" stroke="#3a8a3a" stroke-width="1"/><path d="M9 5H13M9 7.500H13M9 10H13M9 12H13" stroke="#3a8a3a" stroke-width="0.9"/><rect x="0" y="3" width="9" height="9" fill="#2e8b3a"/><path d="M2.500 5.500L6.500 9.500M6.500 5.500L2.500 9.500" stroke="#fff" stroke-width="1.2"/></svg>
<div style="left:313px;top:96px;width:120px;height:26px;line-height:26px;font-size:12.5px;color:#333;text-align:left;white-space:nowrap;font-family:'Liberation Sans','Noto Sans CJK SC',sans-serif;">Evap_Hgbbs.xls</div>
<svg style="left:475px;top:104px" width="9" height="9"><path d="M0.5 0.5L8 8M8 0.5L0.5 8" stroke="#444" stroke-width="1.1"/></svg>
<svg style="left:496px;top:102px" width="14" height="14"><path d="M7 0.5V13.5M0.5 7H13.5" stroke="#555" stroke-width="1.6"/></svg>
<svg style="left:1215px;top:99px" width="70" height="20" viewBox="1215 98 70 20" fill="none">
<path d="M1220 103H1223.500Q1228.500 103 1228.500 108Q1228.500 113.500 1223.500 113.500H1220Z" fill="#8a8f9a"/><path d="M1222 110L1223 106M1224 111L1226 106" stroke="#fff" stroke-width="1"/>
<path d="M1242.500 103H1251V108.500H1247V111H1242.500Z" fill="#666"/><path d="M1247.500 109.500H1255L1251.200 113.500Z" fill="#666"/>
<path d="M1261.500 100V117" stroke="#c8c8c8"/>
<circle cx="1273" cy="107.500" r="4.600" stroke="#666" stroke-width="1.300"/><path d="M1276.300 111L1280 114.700" stroke="#666" stroke-width="1.600"/></svg>
<div style="left:1285px;top:99px;width:80px;height:20px;line-height:20px;font-size:12px;color:#333;text-align:left;white-space:nowrap;font-family:'Liberation Sans','Noto Sans CJK SC',sans-serif;">点此查找命令</div>
<div style="left:0px;top:122px;width:1366px;height:26px;background:#e3e3e5;"></div>
<div style="left:0px;top:125px;width:124px;height:20px;background:#fff;border:1px solid #d0d0d2;border-left:none;"></div>
<div style="left:40px;top:126px;width:32px;height:20px;line-height:22px;font-size:13.4px;color:#222;text-align:center;white-space:nowrap;font-family:'Liberation Mono',monospace;">Ea</div>
<svg style="left:114px;top:133px" width="7" height="4"><path d="M0 0H6.4L3.2 3.6Z" fill="#555"/></svg>
<svg style="left:162px;top:126px" width="18" height="18" viewBox="0 0 18 18" fill="none"><circle cx="7.5" cy="7.500" r="5.800" stroke="#666" stroke-width="1.300"/><path d="M11.800 11.800L16.500 16.500" stroke="#666" stroke-width="2"/><path d="M5.500 10.500V4.500H8Q9.500 4.500 9.500 6Q9.500 7.500 8 7.500H5.500M8 7.500L10 10.500" stroke="#666" stroke-width="0.9"/></svg>
<div style="left:188px;top:125px;width:20px;height:22px;line-height:21px;font-size:17px;color:#666;text-align:left;white-space:nowrap;font-family:'Liberation Serif',serif;font-style:italic;">fx</div>
<div style="left:224px;top:125px;width:1135px;height:20px;background:#fff;border:1px solid #d0d0d2;"></div>
<div style="left:233px;top:126px;width:300px;height:20px;line-height:22px;font-size:13.3px;color:#222;text-align:left;white-space:nowrap;font-family:'Liberation Mono',monospace;">0.000574486500511585</div>
<div style="left:0px;top:148px;width:1340px;height:533px;background:#fff;"></div>
<div style="left:0px;top:148px;width:1340px;height:16px;background:#efefef;"></div>
<div style="left:0px;top:164px;width:1340px;height:1px;background:#c6c6c6;"></div>
<div style="left:30px;top:148px;width:265px;height:15px;line-height:16px;font-size:13.5px;color:#4a4a4a;text-align:center;white-space:nowrap;font-family:'Liberation Sans','Noto Sans CJK SC',sans-serif;">A</div>
<div style="left:29px;top:148px;width:1px;height:16px;background:#dadada;"></div>
<div style="left:295px;top:148px;width:62px;height:15px;line-height:16px;font-size:13.5px;color:#4a4a4a;text-align:center;white-space:nowrap;font-family:'Liberation Sans','Noto Sans CJK SC',sans-serif;">B</div>
<div style="left:294px;top:148px;width:1px;height:16px;background:#dadada;"></div>
<div style="left:357px;top:148px;width:97px;height:17px;background:#d9e7d1;border-bottom:2px solid #58a52f;"></div>
<div style="left:357px;top:148px;width:98px;height:15px;line-height:16px;font-size:13.5px;color:#1e8f1e;text-align:center;white-space:nowrap;font-family:'Liberation Sans','Noto Sans CJK SC',sans-serif;">C</div>
<div style="left:356px;top:148px;width:1px;height:16px;background:#dadada;"></div>
<div style="left:455px;top:148px;width:98px;height:15px;line-height:16px;font-size:13.5px;color:#4a4a4a;text-align:center;white-space:nowrap;font-family:'Liberation Sans','Noto Sans CJK SC',sans-serif;">D</div>
<div style="left:454px;top:148px;width:1px;height:16px;background:#dadada;"></div>
<div style="left:553px;top:148px;width:81px;height:15px;line-height:16px;font-size:13.5px;color:#4a4a4a;text-align:center;white-space:nowrap;font-family:'Liberation Sans','Noto Sans CJK SC',sans-serif;">E</div>
<div style="left:552px;top:148px;width:1px;height:16px;background:#dadada;"></div>
<div style="left:634px;top:148px;width:81px;height:15px;line-height:16px;font-size:13.5px;color:#4a4a4a;text-align:center;white-space:nowrap;font-family:'Liberation Sans','Noto Sans CJK SC',sans-serif;">F</div>
<div style="left:633px;top:148px;width:1px;height:16px;background:#dadada;"></div>
<div style="left:715px;top:148px;width:67px;height:15px;line-height:16px;font-size:13.5px;color:#4a4a4a;text-align:center;white-space:nowrap;font-family:'Liberation Sans','Noto Sans CJK SC',sans-serif;">G</div>
<div style="left:714px;top:148px;width:1px;height:16px;background:#dadada;"></div>
<div style="left:782px;top:148px;width:67px;height:15px;line-height:16px;font-size:13.5px;color:#4a4a4a;text-align:center;white-space:nowrap;font-family:'Liberation Sans','Noto Sans CJK SC',sans-serif;">H</div>
<div style="left:781px;top:148px;width:1px;height:16px;background:#dadada;"></div>
<div style="left:849px;top:148px;width:67px;height:15px;line-height:16px;font-size:13.5px;color:#4a4a4a;text-align:center;white-space:nowrap;font-family:'Liberation Sans','Noto Sans CJK SC',sans-serif;">I</div>
<div style="left:848px;top:148px;width:1px;height:16px;background:#dadada;"></div>
<div style="left:916px;top:148px;width:67px;height:15px;line-height:16px;font-size:13.5px;color:#4a4a4a;text-align:center;white-space:nowrap;font-family:'Liberation Sans','Noto Sans CJK SC',sans-serif;">J</div>
<div style="left:915px;top:148px;width:1px;height:16px;background:#dadada;"></div>
<div style="left:983px;top:148px;width:67px;height:15px;line-height:16px;font-size:13.5px;color:#4a4a4a;text-align:center;white-space:nowrap;font-family:'Liberation Sans','Noto Sans CJK SC',sans-serif;">K</div>
<div style="left:982px;top:148px;width:1px;height:16px;background:#dadada;"></div>
<div style="left:1050px;top:148px;width:67px;height:15px;line-height:16px;font-size:13.5px;color:#4a4a4a;text-align:center;white-space:nowrap;font-family:'Liberation Sans','Noto Sans CJK SC',sans-serif;">L</div>
<div style="left:1049px;top:148px;width:1px;height:16px;background:#dadada;"></div>
<div style="left:1117px;top:148px;width:67px;height:15px;line-height:16px;font-size:13.5px;color:#4a4a4a;text-align:center;white-space:nowrap;font-family:'Liberation Sans','Noto Sans CJK SC',sans-serif;">M</div>
<div style="left:1116px;top:148px;width:1px;height:16px;background:#dadada;"></div>
<div style="left:1184px;top:148px;width:67px;height:15px;line-height:16px;font-size:13.5px;color:#4a4a4a;text-align:center;white-space:nowrap;font-family:'Liberation Sans','Noto Sans CJK SC',sans-serif;">N</div>
<div style="left:1183px;top:148px;width:1px;height:16px;background:#dadada;"></div>
<div style="left:1251px;top:148px;width:67px;height:15px;line-height:16px;font-size:13.5px;color:#4a4a4a;text-align:center;white-space:nowrap;font-family:'Liberation Sans','Noto Sans CJK SC',sans-serif;">O</div>
<div style="left:1250px;top:148px;width:1px;height:16px;background:#dadada;"></div>
<div style="left:1317px;top:148px;width:1px;height:16px;background:#dadada;"></div>
<div style="left:1339px;top:148px;width:1px;height:16px;background:#dadada;"></div>
<svg style="left:17px;top:152px" width="10" height="10"><path d="M9 0.500V9H0.500Z" fill="#b9b9b9"/></svg>
<div style="left:0px;top:165px;width:30px;height:516px;background:#efefef;border-right:1px solid #c6c6c6;"></div>
<div style="left:0px;top:164px;width:29px;height:17px;line-height:17px;font-size:13.5px;color:#4a4a4a;text-align:center;white-space:nowrap;font-family:'Liberation Sans','Noto Sans CJK SC',sans-serif;">1</div>
<div style="left:0px;top:181px;width:29px;height:1px;background:#dcdcdc;"></div>
<div style="left:0px;top:181px;width:29px;height:18px;line-height:18px;font-size:13.5px;color:#4a4a4a;text-align:center;white-space:nowrap;font-family:'Liberation Sans','Noto Sans CJK SC',sans-serif;">2</div>
<div style="left:0px;top:199px;width:29px;height:1px;background:#dcdcdc;"></div>
<div style="left:0px;top:199px;width:29px;height:17px;line-height:17px;font-size:13.5px;color:#4a4a4a;text-align:center;white-space:nowrap;font-family:'Liberation Sans','Noto Sans CJK SC',sans-serif;">3</div>
<div style="left:0px;top:216px;width:29px;height:1px;background:#dcdcdc;"></div>
<div style="left:0px;top:216px;width:29px;height:17px;line-height:17px;font-size:13.5px;color:#4a4a4a;text-align:center;white-space:nowrap;font-family:'Liberation Sans','Noto Sans CJK SC',sans-serif;">4</div>
<div style="left:0px;top:233px;width:29px;height:1px;background:#dcdcdc;"></div>
<div style="left:0px;top:233px;width:29px;height:17px;line-height:17px;font-size:13.5px;color:#4a4a4a;text-align:center;white-space:nowrap;font-family:'Liberation Sans','Noto Sans CJK SC',sans-serif;">5</div>
<div style="left:0px;top:250px;width:29px;height:1px;background:#dcdcdc;"></div>
<div style="left:0px;top:250px;width:29px;height:17px;line-height:17px;font-size:13.5px;color:#4a4a4a;text-align:center;white-space:nowrap;font-family:'Liberation Sans','Noto Sans CJK SC',sans-serif;">6</div>
<div style="left:0px;top:267px;width:29px;height:1px;background:#dcdcdc;"></div>
<div style="left:0px;top:267px;width:29px;height:17px;line-height:17px;font-size:13.5px;color:#4a4a4a;text-align:center;white-space:nowrap;font-family:'Liberation Sans','Noto Sans CJK SC',sans-serif;">7</div>
<div style="left:0px;top:284px;width:29px;height:1px;background:#dcdcdc;"></div>
<div style="left:0px;top:284px;width:29px;height:17px;line-height:17px;font-size:13.5px;color:#4a4a4a;text-align:center;white-space:nowrap;font-family:'Liberation Sans','Noto Sans CJK SC',sans-serif;">8</div>
<div style="left:0px;top:301px;width:29px;height:1px;background:#dcdcdc;"></div>
<div style="left:0px;top:301px;width:29px;height:18px;line-height:18px;font-size:13.5px;color:#4a4a4a;text-align:center;white-space:nowrap;font-family:'Liberation Sans','Noto Sans CJK SC',sans-serif;">9</div>
<div style="left:0px;top:319px;width:29px;height:1px;background:#dcdcdc;"></div>
<div style="left:0px;top:319px;width:29px;height:18px;line-height:18px;font-size:13.5px;color:#4a4a4a;text-align:center;white-space:nowrap;font-family:'Liberation Sans','Noto Sans CJK SC',sans-serif;">10</div>
<div style="left:0px;top:337px;width:29px;height:1px;background:#dcdcdc;"></div>
<div style="left:0px;top:337px;width:29px;height:17px;line-height:17px;font-size:13.5px;color:#4a4a4a;text-align:center;white-space:nowrap;font-family:'Liberation Sans','Noto Sans CJK SC',sans-serif;">11</div>
<div style="left:0px;top:354px;width:29px;height:1px;background:#dcdcdc;"></div>
<div style="left:0px;top:354px;width:29px;height:17px;line-height:17px;font-size:13.5px;color:#4a4a4a;text-align:center;white-space:nowrap;font-family:'Liberation Sans','Noto Sans CJK SC',sans-serif;">12</div>
<div style="left:0px;top:371px;width:29px;height:1px;background:#dcdcdc;"></div>
<div style="left:0px;top:371px;width:29px;height:17px;line-height:17px;font-size:13.5px;color:#4a4a4a;text-align:center;white-space:nowrap;font-family:'Liberation Sans','Noto Sans CJK SC',sans-serif;">13</div>
<div style="left:0px;top:388px;width:29px;height:1px;background:#dcdcdc;"></div>
<div style="left:0px;top:388px;width:29px;height:17px;line-height:17px;font-size:13.5px;color:#4a4a4a;text-align:center;white-space:nowrap;font-family:'Liberation Sans','Noto Sans CJK SC',sans-serif;">14</div>
<div style="left:0px;top:405px;width:29px;height:1px;background:#dcdcdc;"></div>
<div style="left:0px;top:405px;width:29px;height:17px;line-height:17px;font-size:13.5px;color:#4a4a4a;text-align:center;white-space:nowrap;font-family:'Liberation Sans','Noto Sans CJK SC',sans-serif;">15</div>
<div style="left:0px;top:422px;width:29px;height:1px;background:#dcdcdc;"></div>
<div style="left:0px;top:422px;width:29px;height:18px;line-height:18px;font-size:13.5px;color:#4a4a4a;text-align:center;white-space:nowrap;font-family:'Liberation Sans','Noto Sans CJK SC',sans-serif;">16</div>
<div style="left:0px;top:440px;width:29px;height:1px;background:#dcdcdc;"></div>
<div style="left:0px;top:440px;width:29px;height:17px;line-height:17px;font-size:13.5px;color:#4a4a4a;text-align:center;white-space:nowrap;font-family:'Liberation Sans','Noto Sans CJK SC',sans-serif;">17</div>
<div style="left:0px;top:457px;width:29px;height:1px;background:#dcdcdc;"></div>
<div style="left:0px;top:457px;width:29px;height:17px;line-height:17px;font-size:13.5px;color:#4a4a4a;text-align:center;white-space:nowrap;font-family:'Liberation Sans','Noto Sans CJK SC',sans-serif;">18</div>
<div style="left:0px;top:474px;width:29px;height:1px;background:#dcdcdc;"></div>
<div style="left:0px;top:474px;width:29px;height:18px;line-height:18px;font-size:13.5px;color:#4a4a4a;text-align:center;white-space:nowrap;font-family:'Liberation Sans','Noto Sans CJK SC',sans-serif;">19</div>
<div style="left:0px;top:492px;width:29px;height:1px;background:#dcdcdc;"></div>
<div style="left:0px;top:492px;width:29px;height:17px;line-height:17px;font-size:13.5px;color:#4a4a4a;text-align:center;white-space:nowrap;font-family:'Liberation Sans','Noto Sans CJK SC',sans-serif;">20</div>
<div style="left:0px;top:509px;width:29px;height:1px;background:#dcdcdc;"></div>
<div style="left:0px;top:509px;width:29px;height:17px;line-height:17px;font-size:13.5px;color:#4a4a4a;text-align:center;white-space:nowrap;font-family:'Liberation Sans','Noto Sans CJK SC',sans-serif;">21</div>
<div style="left:0px;top:526px;width:29px;height:1px;background:#dcdcdc;"></div>
<div style="left:0px;top:526px;width:29px;height:18px;line-height:18px;font-size:13.5px;color:#4a4a4a;text-align:center;white-space:nowrap;font-family:'Liberation Sans','Noto Sans CJK SC',sans-serif;">22</div>
<div style="left:0px;top:544px;width:29px;height:1px;background:#dcdcdc;"></div>
<div style="left:0px;top:544px;width:29px;height:17px;line-height:17px;font-size:13.5px;color:#4a4a4a;text-align:center;white-space:nowrap;font-family:'Liberation Sans','Noto Sans CJK SC',sans-serif;">23</div>
<div style="left:0px;top:561px;width:29px;height:1px;background:#dcdcdc;"></div>
<div style="left:0px;top:561px;width:29px;height:17px;line-height:17px;font-size:13.5px;color:#4a4a4a;text-align:center;white-space:nowrap;font-family:'Liberation Sans','Noto Sans CJK SC',sans-serif;">24</div>
<div style="left:0px;top:578px;width:29px;height:1px;background:#dcdcdc;"></div>
<div style="left:0px;top:578px;width:29px;height:17px;line-height:17px;font-size:13.5px;color:#4a4a4a;text-align:center;white-space:nowrap;font-family:'Liberation Sans','Noto Sans CJK SC',sans-serif;">25</div>
<div style="left:0px;top:595px;width:29px;height:1px;background:#dcdcdc;"></div>
<div style="left:0px;top:595px;width:29px;height:17px;line-height:17px;font-size:13.5px;color:#4a4a4a;text-align:center;white-space:nowrap;font-family:'Liberation Sans','Noto Sans CJK SC',sans-serif;">26</div>
<div style="left:0px;top:612px;width:29px;height:1px;background:#dcdcdc;"></div>
<div style="left:0px;top:612px;width:29px;height:17px;line-height:17px;font-size:13.5px;color:#4a4a4a;text-align:center;white-space:nowrap;font-family:'Liberation Sans','Noto Sans CJK SC',sans-serif;">27</div>
<div style="left:0px;top:629px;width:29px;height:1px;background:#dcdcdc;"></div>
<div style="left:0px;top:629px;width:29px;height:18px;line-height:18px;font-size:13.5px;color:#4a4a4a;text-align:center;white-space:nowrap;font-family:'Liberation Sans','Noto Sans CJK SC',sans-serif;">28</div>
<div style="left:0px;top:647px;width:29px;height:1px;background:#dcdcdc;"></div>
<div style="left:0px;top:648px;width:30px;height:18px;background:#d9e7d1;border-right:2px solid #58a52f;"></div>
<div style="left:0px;top:647px;width:29px;height:18px;line-height:18px;font-size:13.5px;color:#1e8f1e;text-align:center;white-space:nowrap;font-family:'Liberation Sans','Noto Sans CJK SC',sans-serif;">29</div>
<div style="left:0px;top:665px;width:29px;height:1px;background:#dcdcdc;"></div>
<div style="left:0px;top:665px;width:29px;height:19px;line-height:19px;font-size:13.5px;color:#4a4a4a;text-align:center;white-space:nowrap;font-family:'Liberation Sans','Noto Sans CJK SC',sans-serif;">30</div>
<div style="left:0px;top:684px;width:29px;height:1px;background:#dcdcdc;"></div>
<div style="left:29px;top:164px;width:522px;height:34px;background:#c0c0c0;"></div>
<div style="left:357px;top:217px;width:98px;height:17px;background:#00ffff;"></div>
<div style="left:357px;top:251px;width:98px;height:17px;background:#00ffff;"></div>
<div style="left:357px;top:268px;width:98px;height:17px;background:#00ffff;"></div>
<div style="left:357px;top:285px;width:98px;height:17px;background:#00ffff;"></div>
<div style="left:357px;top:302px;width:98px;height:18px;background:#00ffff;"></div>
<div style="left:357px;top:441px;width:98px;height:17px;background:#00ffff;"></div>
<div style="left:357px;top:234px;width:98px;height:17px;background:#00ff00;"></div>
<div style="left:357px;top:338px;width:98px;height:17px;background:#00ff00;"></div>
<div style="left:357px;top:355px;width:98px;height:17px;background:#00ff00;"></div>
<div style="left:357px;top:372px;width:98px;height:17px;background:#00ff00;"></div>
<div style="left:357px;top:406px;width:98px;height:17px;background:#00ff00;"></div>
<div style="left:357px;top:423px;width:98px;height:18px;background:#00ff00;"></div>
<div style="left:357px;top:458px;width:98px;height:17px;background:#00ff00;"></div>
<div style="left:357px;top:475px;width:98px;height:18px;background:#00ff00;"></div>
<div style="left:295px;top:389px;width:258px;height:17px;background:#00ff00;"></div>
<div style="left:357px;top:510px;width:98px;height:35px;background:#ffff00;"></div>
<div style="left:30px;top:545px;width:264px;height:103px;background:#00ffff;"></div>
<div style="left:294px;top:545px;width:259px;height:103px;background:#ffff00;"></div>
<div style="left:553px;top:441px;width:294px;height:34px;background:#c0c0c0;"></div>
<div style="left:553px;top:493px;width:81px;height:17px;background:#ffff00;"></div>
<div style="left:30px;top:216px;width:522px;height:1px;background:#000;"></div>
<div style="left:30px;top:233px;width:522px;height:1px;background:#000;"></div>
<div style="left:30px;top:250px;width:522px;height:1px;background:#000;"></div>
<div style="left:30px;top:267px;width:522px;height:1px;background:#000;"></div>
<div style="left:30px;top:284px;width:522px;height:1px;background:#000;"></div>
<div style="left:30px;top:301px;width:522px;height:1px;background:#000;"></div>
<div style="left:30px;top:354px;width:522px;height:1px;background:#000;"></div>
<div style="left:30px;top:371px;width:522px;height:1px;background:#000;"></div>
<div style="left:30px;top:388px;width:522px;height:1px;background:#000;"></div>
<div style="left:30px;top:405px;width:522px;height:1px;background:#000;"></div>
<div style="left:30px;top:422px;width:522px;height:1px;background:#000;"></div>
<div style="left:30px;top:440px;width:522px;height:1px;background:#000;"></div>
<div style="left:30px;top:457px;width:522px;height:1px;background:#000;"></div>
<div style="left:30px;top:474px;width:522px;height:1px;background:#000;"></div>
<div style="left:30px;top:509px;width:522px;height:1px;background:#000;"></div>
<div style="left:30px;top:526px;width:522px;height:1px;background:#000;"></div>
<div style="left:30px;top:665px;width:522px;height:1px;background:#000;"></div>
<div style="left:30px;top:198px;width:522px;height:2px;background:#000;"></div>
<div style="left:30px;top:318px;width:522px;height:2px;background:#000;"></div>
<div style="left:30px;top:336px;width:522px;height:2px;background:#000;"></div>
<div style="left:30px;top:491px;width:522px;height:2px;background:#000;"></div>
<div style="left:30px;top:543px;width:522px;height:2px;background:#000;"></div>
<div style="left:30px;top:646px;width:522px;height:2px;background:#000;"></div>
<div style="left:294px;top:200px;width:1px;height:119px;background:#000;"></div>
<div style="left:294px;top:338px;width:1px;height:206px;background:#000;"></div>
<div style="left:294px;top:648px;width:1px;height:37px;background:#000;"></div>
<div style="left:356px;top:200px;width:1px;height:119px;background:#000;"></div>
<div style="left:356px;top:338px;width:1px;height:206px;background:#000;"></div>
<div style="left:356px;top:648px;width:1px;height:37px;background:#000;"></div>
<div style="left:454px;top:200px;width:1px;height:119px;background:#000;"></div>
<div style="left:454px;top:338px;width:1px;height:206px;background:#000;"></div>
<div style="left:454px;top:648px;width:1px;height:37px;background:#000;"></div>
<div style="left:295px;top:389px;width:257px;height:16px;background:#00ff00;"></div>
<div style="left:293px;top:545px;width:2px;height:85px;background:#000;"></div>
<div style="left:551px;top:164px;width:2px;height:517px;background:#000;"></div>
<div style="left:847px;top:164px;width:2px;height:484px;background:#000;"></div>
<div style="left:848px;top:648px;width:1px;height:18px;background:#000;"></div>
<div style="left:552px;top:439px;width:296px;height:2px;background:#000;"></div>
<div style="left:552px;top:646px;width:296px;height:2px;background:#000;"></div>
<div style="left:552px;top:665px;width:296px;height:1px;background:#000;"></div>
<div style="left:633px;top:648px;width:1px;height:18px;background:#000;"></div>
<div style="left:714px;top:648px;width:1px;height:18px;background:#000;"></div>
<div style="left:355px;top:666px;width:3px;height:15px;background:#000;"></div>
<div style="left:453px;top:666px;width:3px;height:15px;background:#000;"></div>
<div style="left:31px;top:165px;width:522px;height:35px;line-height:48px;font-size:19.6px;color:#000;text-align:center;white-space:nowrap;font-family:'Liberation Sans','Noto Serif CJK SC',serif;font-weight:bold;letter-spacing:1.8px;">液体泄漏蒸发量（空气污染量)的计算</div>
<div style="left:32px;top:217px;width:261px;height:17px;line-height:18px;font-size:12.85px;color:#000;text-align:left;white-space:nowrap;font-family:'Liberation Sans','WenQuanYi Zen Hei',sans-serif;"><span style="font-size:13px;letter-spacing:0px;font-family:'WenQuanYi Zen Hei',sans-serif;">大气压</span></div>
<div style="left:32px;top:234px;width:261px;height:17px;line-height:18px;font-size:12.85px;color:#000;text-align:left;white-space:nowrap;font-family:'Liberation Sans','WenQuanYi Zen Hei',sans-serif;"><span style="font-size:13px;letter-spacing:0px;font-family:'WenQuanYi Zen Hei',sans-serif;">温度</span></div>
<div style="left:32px;top:251px;width:261px;height:17px;line-height:18px;font-size:12.85px;color:#000;text-align:left;white-space:nowrap;font-family:'Liberation Sans','WenQuanYi Zen Hei',sans-serif;"><span style="font-size:13px;letter-spacing:0px;font-family:'WenQuanYi Zen Hei',sans-serif;">空气粘度</span></div>
<div style="left:32px;top:268px;width:261px;height:17px;line-height:18px;font-size:12.85px;color:#000;text-align:left;white-space:nowrap;font-family:'Liberation Sans','WenQuanYi Zen Hei',sans-serif;"><span style="font-size:13px;letter-spacing:0px;font-family:'WenQuanYi Zen Hei',sans-serif;">空气密度</span></div>
<div style="left:32px;top:285px;width:261px;height:17px;line-height:18px;font-size:12.85px;color:#000;text-align:left;white-space:nowrap;font-family:'Liberation Sans','WenQuanYi Zen Hei',sans-serif;"><span style="font-size:13px;letter-spacing:0px;font-family:'WenQuanYi Zen Hei',sans-serif;">空气分子里</span></div>
<div style="left:32px;top:303px;width:261px;height:17px;line-height:18px;font-size:12.85px;color:#000;text-align:left;white-space:nowrap;font-family:'Liberation Sans','WenQuanYi Zen Hei',sans-serif;"><span style="font-size:13px;letter-spacing:0px;font-family:'WenQuanYi Zen Hei',sans-serif;">有机蒸气在空气中扩散系数</span></div>
<div style="left:32px;top:338px;width:261px;height:17px;line-height:18px;font-size:12.85px;color:#000;text-align:left;white-space:nowrap;font-family:'Liberation Sans','WenQuanYi Zen Hei',sans-serif;"><span style="font-size:13px;letter-spacing:0px;font-family:'WenQuanYi Zen Hei',sans-serif;">迎风曝露面积的长度</span></div>
<div style="left:32px;top:355px;width:261px;height:17px;line-height:18px;font-size:12.85px;color:#000;text-align:left;white-space:nowrap;font-family:'Liberation Serif','WenQuanYi Zen Hei',serif;"><span style="font-size:13px;letter-spacing:0px;font-family:'WenQuanYi Zen Hei',sans-serif;">风速</span> (<span style="font-size:13px;letter-spacing:0px;font-family:'WenQuanYi Zen Hei',sans-serif;">微风</span> 3m/s, <span style="font-size:13px;letter-spacing:0px;font-family:'WenQuanYi Zen Hei',sans-serif;">中风</span> 5m/s)</div>
<div style="left:32px;top:372px;width:261px;height:17px;line-height:18px;font-size:12.85px;color:#000;text-align:left;white-space:nowrap;font-family:'Liberation Sans','WenQuanYi Zen Hei',sans-serif;"><span style="font-size:13px;letter-spacing:0px;font-family:'WenQuanYi Zen Hei',sans-serif;">总曝露面积</span></div>
<div style="left:32px;top:389px;width:261px;height:17px;line-height:18px;font-size:12.85px;color:#000;text-align:left;white-space:nowrap;font-family:'Liberation Sans','WenQuanYi Zen Hei',sans-serif;"><span style="font-size:13px;letter-spacing:0px;font-family:'WenQuanYi Zen Hei',sans-serif;">泄漏液体的名称</span></div>
<div style="left:32px;top:406px;width:261px;height:17px;line-height:18px;font-size:12.85px;color:#000;text-align:left;white-space:nowrap;font-family:'Liberation Sans','WenQuanYi Zen Hei',sans-serif;"><span style="font-size:13px;letter-spacing:0px;font-family:'WenQuanYi Zen Hei',sans-serif;">泄漏液体的分子里</span></div>
<div style="left:32px;top:424px;width:261px;height:17px;line-height:18px;font-size:12.85px;color:#000;text-align:left;white-space:nowrap;font-family:'Liberation Sans','WenQuanYi Zen Hei',sans-serif;"><span style="font-size:13px;letter-spacing:0px;font-family:'WenQuanYi Zen Hei',sans-serif;">泄漏物在当前温度下的蒸气压</span></div>
<div style="left:32px;top:441px;width:261px;height:17px;line-height:18px;font-size:12.85px;color:#000;text-align:left;white-space:nowrap;font-family:'Liberation Sans','WenQuanYi Zen Hei',sans-serif;"><span style="font-size:13px;letter-spacing:0px;font-family:'WenQuanYi Zen Hei',sans-serif;">上风中泄漏物的蒸气分压（正常为</span>0<span style="font-size:13px;letter-spacing:0px;font-family:'WenQuanYi Zen Hei',sans-serif;">）</span></div>
<div style="left:32px;top:458px;width:261px;height:17px;line-height:18px;font-size:12.85px;color:#000;text-align:left;white-space:nowrap;font-family:'Liberation Sans','WenQuanYi Zen Hei',sans-serif;"><span style="font-size:13px;letter-spacing:0px;font-family:'WenQuanYi Zen Hei',sans-serif;">泄漏物的沸点</span></div>
<div style="left:32px;top:476px;width:261px;height:17px;line-height:18px;font-size:12.85px;color:#000;text-align:left;white-space:nowrap;font-family:'Liberation Sans','WenQuanYi Zen Hei',sans-serif;"><span style="font-size:13px;letter-spacing:0px;font-family:'WenQuanYi Zen Hei',sans-serif;">泄漏物</span>20C<span style="font-size:13px;letter-spacing:0px;font-family:'WenQuanYi Zen Hei',sans-serif;">时液体表面张力</span></div>
<div style="left:32px;top:510px;width:261px;height:17px;line-height:18px;font-size:12.85px;color:#000;text-align:left;white-space:nowrap;font-family:'Liberation Sans','WenQuanYi Zen Hei',sans-serif;"><span style="font-size:13px;letter-spacing:0px;font-family:'WenQuanYi Zen Hei',sans-serif;">单位面积蒸发速度</span></div>
<div style="left:32px;top:528px;width:261px;height:17px;line-height:18px;font-size:12.85px;color:#000;text-align:left;white-space:nowrap;font-family:'Liberation Sans','WenQuanYi Zen Hei',sans-serif;"><span style="font-size:13px;letter-spacing:0px;font-family:'WenQuanYi Zen Hei',sans-serif;">总泄漏面积蒸发速度</span></div>
<div style="left:297px;top:217px;width:58px;height:17px;line-height:18px;font-size:12.85px;color:#000;text-align:center;white-space:nowrap;font-family:'Liberation Sans','WenQuanYi Zen Hei',sans-serif;">P</div>
<div style="left:297px;top:234px;width:58px;height:17px;line-height:18px;font-size:12.85px;color:#000;text-align:center;white-space:nowrap;font-family:'Liberation Sans','WenQuanYi Zen Hei',sans-serif;">T</div>
<div style="left:297px;top:251px;width:58px;height:17px;line-height:18px;font-size:12.85px;color:#000;text-align:center;white-space:nowrap;font-family:'Liberation Sans','WenQuanYi Zen Hei',sans-serif;">e</div>
<div style="left:297px;top:268px;width:58px;height:17px;line-height:18px;font-size:12.85px;color:#000;text-align:center;white-space:nowrap;font-family:'Liberation Sans','WenQuanYi Zen Hei',sans-serif;">Rhoa</div>
<div style="left:297px;top:285px;width:58px;height:17px;line-height:18px;font-size:12.85px;color:#000;text-align:center;white-space:nowrap;font-family:'Liberation Sans','WenQuanYi Zen Hei',sans-serif;">Mwa</div>
<div style="left:297px;top:303px;width:58px;height:17px;line-height:18px;font-size:12.85px;color:#000;text-align:center;white-space:nowrap;font-family:'Liberation Sans','WenQuanYi Zen Hei',sans-serif;">D</div>
<div style="left:297px;top:338px;width:58px;height:17px;line-height:18px;font-size:12.85px;color:#000;text-align:center;white-space:nowrap;font-family:'Liberation Sans','WenQuanYi Zen Hei',sans-serif;">L</div>
<div style="left:297px;top:355px;width:58px;height:17px;line-height:18px;font-size:12.85px;color:#000;text-align:center;white-space:nowrap;font-family:'Liberation Sans','WenQuanYi Zen Hei',sans-serif;">Uo</div>
<div style="left:297px;top:372px;width:58px;height:17px;line-height:18px;font-size:12.85px;color:#000;text-align:center;white-space:nowrap;font-family:'Liberation Sans','WenQuanYi Zen Hei',sans-serif;">S</div>
<div style="left:297px;top:406px;width:58px;height:17px;line-height:18px;font-size:12.85px;color:#000;text-align:center;white-space:nowrap;font-family:'Liberation Sans','WenQuanYi Zen Hei',sans-serif;">Mw</div>
<div style="left:297px;top:424px;width:58px;height:17px;line-height:18px;font-size:12.85px;color:#000;text-align:center;white-space:nowrap;font-family:'Liberation Sans','WenQuanYi Zen Hei',sans-serif;">Pv</div>
<div style="left:297px;top:441px;width:58px;height:17px;line-height:18px;font-size:12.85px;color:#000;text-align:center;white-space:nowrap;font-family:'Liberation Sans','WenQuanYi Zen Hei',sans-serif;">Pi</div>
<div style="left:297px;top:458px;width:58px;height:17px;line-height:18px;font-size:12.85px;color:#000;text-align:center;white-space:nowrap;font-family:'Liberation Sans','WenQuanYi Zen Hei',sans-serif;">Tb</div>
<div style="left:297px;top:476px;width:58px;height:17px;line-height:18px;font-size:12.85px;color:#000;text-align:center;white-space:nowrap;font-family:'Liberation Sans','WenQuanYi Zen Hei',sans-serif;">G</div>
<div style="left:297px;top:510px;width:58px;height:17px;line-height:18px;font-size:12.85px;color:#000;text-align:center;white-space:nowrap;font-family:'Liberation Sans','WenQuanYi Zen Hei',sans-serif;">Ea</div>
<div style="left:297px;top:528px;width:58px;height:17px;line-height:18px;font-size:12.85px;color:#000;text-align:center;white-space:nowrap;font-family:'Liberation Sans','WenQuanYi Zen Hei',sans-serif;">EV</div>
<div style="left:297px;top:649px;width:58px;height:17px;line-height:18px;font-size:12.85px;color:#000;text-align:center;white-space:nowrap;font-family:'Liberation Sans','WenQuanYi Zen Hei',sans-serif;">Ea</div>
<div style="left:297px;top:668px;width:58px;height:17px;line-height:18px;font-size:12.85px;color:#000;text-align:center;white-space:nowrap;font-family:'Liberation Sans','WenQuanYi Zen Hei',sans-serif;">E</div>
<div style="left:357px;top:219px;width:86px;height:17px;line-height:18px;font-size:13.2px;color:#000;text-align:right;white-space:nowrap;font-family:'Liberation Mono','WenQuanYi Zen Hei',monospace;font-weight:bold;">101</div>
<div style="left:357px;top:236px;width:86px;height:17px;line-height:18px;font-size:13.2px;color:#000;text-align:right;white-space:nowrap;font-family:'Liberation Mono','WenQuanYi Zen Hei',monospace;font-weight:bold;">25</div>
<div style="left:357px;top:253px;width:86px;height:17px;line-height:18px;font-size:13.2px;color:#000;text-align:right;white-space:nowrap;font-family:'Liberation Mono','WenQuanYi Zen Hei',monospace;font-weight:bold;">0.00193</div>
<div style="left:357px;top:270px;width:94px;height:17px;line-height:18px;font-size:13.2px;color:#000;text-align:right;white-space:nowrap;font-family:'Liberation Mono','WenQuanYi Zen Hei',monospace;font-weight:bold;">###########</div>
<div style="left:357px;top:287px;width:86px;height:17px;line-height:18px;font-size:13.2px;color:#000;text-align:right;white-space:nowrap;font-family:'Liberation Mono','WenQuanYi Zen Hei',monospace;font-weight:bold;">29</div>
<div style="left:357px;top:305px;width:86px;height:17px;line-height:18px;font-size:13.2px;color:#000;text-align:right;white-space:nowrap;font-family:'Liberation Mono','WenQuanYi Zen Hei',monospace;font-weight:bold;">2.47527E-05</div>
<div style="left:357px;top:340px;width:86px;height:17px;line-height:18px;font-size:13.2px;color:#000;text-align:right;white-space:nowrap;font-family:'Liberation Mono','WenQuanYi Zen Hei',monospace;font-weight:bold;">14.15</div>
<div style="left:357px;top:357px;width:86px;height:17px;line-height:18px;font-size:13.2px;color:#000;text-align:right;white-space:nowrap;font-family:'Liberation Mono','WenQuanYi Zen Hei',monospace;font-weight:bold;">3.14</div>
<div style="left:357px;top:374px;width:86px;height:17px;line-height:18px;font-size:13.2px;color:#000;text-align:right;white-space:nowrap;font-family:'Liberation Mono','WenQuanYi Zen Hei',monospace;font-weight:bold;">10</div>
<div style="left:357px;top:408px;width:86px;height:17px;line-height:18px;font-size:13.2px;color:#000;text-align:right;white-space:nowrap;font-family:'Liberation Mono','WenQuanYi Zen Hei',monospace;font-weight:bold;">78</div>
<div style="left:357px;top:426px;width:86px;height:17px;line-height:18px;font-size:13.2px;color:#000;text-align:right;white-space:nowrap;font-family:'Liberation Mono','WenQuanYi Zen Hei',monospace;font-weight:bold;">12.4</div>
<div style="left:357px;top:443px;width:86px;height:17px;line-height:18px;font-size:13.2px;color:#000;text-align:right;white-space:nowrap;font-family:'Liberation Mono','WenQuanYi Zen Hei',monospace;font-weight:bold;">0</div>
<div style="left:357px;top:460px;width:86px;height:17px;line-height:18px;font-size:13.2px;color:#000;text-align:right;white-space:nowrap;font-family:'Liberation Mono','WenQuanYi Zen Hei',monospace;font-weight:bold;">80</div>
<div style="left:357px;top:478px;width:86px;height:17px;line-height:18px;font-size:13.2px;color:#000;text-align:right;white-space:nowrap;font-family:'Liberation Mono','WenQuanYi Zen Hei',monospace;font-weight:bold;">0.0028</div>
<div style="left:359px;top:200px;width:94px;height:17px;line-height:18px;font-size:12.85px;color:#000;text-align:left;white-space:nowrap;font-family:'Liberation Sans','WenQuanYi Zen Hei',sans-serif;"><span style="font-size:13px;letter-spacing:0px;font-family:'WenQuanYi Zen Hei',sans-serif;">输入参数</span></div>
<div style="left:457px;top:200px;width:94px;height:17px;line-height:18px;font-size:12.85px;color:#000;text-align:center;white-space:nowrap;font-family:'Liberation Sans','WenQuanYi Zen Hei',sans-serif;"><span style="font-size:13px;letter-spacing:0px;font-family:'WenQuanYi Zen Hei',sans-serif;">单位</span></div>
<div style="left:359px;top:493px;width:94px;height:17px;line-height:18px;font-size:12.85px;color:#000;text-align:left;white-space:nowrap;font-family:'Liberation Sans','WenQuanYi Zen Hei',sans-serif;"><span style="font-size:13px;letter-spacing:0px;font-family:'WenQuanYi Zen Hei',sans-serif;">输出</span></div>
<div style="left:297px;top:389px;width:254px;height:17px;line-height:18px;font-size:12.85px;color:#000;text-align:center;white-space:nowrap;font-family:'Liberation Sans','WenQuanYi Zen Hei',sans-serif;"><span style="font-size:13px;letter-spacing:0px;font-family:'WenQuanYi Zen Hei',sans-serif;">苯</span></div>
<div style="left:457px;top:217px;width:94px;height:17px;line-height:18px;font-size:12.85px;color:#000;text-align:center;white-space:nowrap;font-family:'Liberation Sans','WenQuanYi Zen Hei',sans-serif;">Kpa</div>
<div style="left:457px;top:234px;width:94px;height:17px;line-height:18px;font-size:12.85px;color:#000;text-align:center;white-space:nowrap;font-family:'Liberation Sans','WenQuanYi Zen Hei',sans-serif;">C</div>
<div style="left:457px;top:251px;width:94px;height:17px;line-height:18px;font-size:12.85px;color:#000;text-align:center;white-space:nowrap;font-family:'Liberation Sans','WenQuanYi Zen Hei',sans-serif;">m2/s</div>
<div style="left:457px;top:268px;width:94px;height:17px;line-height:18px;font-size:12.85px;color:#000;text-align:center;white-space:nowrap;font-family:'Liberation Sans','WenQuanYi Zen Hei',sans-serif;">kg/m^3</div>
<div style="left:457px;top:285px;width:94px;height:17px;line-height:18px;font-size:12.85px;color:#000;text-align:center;white-space:nowrap;font-family:'Liberation Sans','WenQuanYi Zen Hei',sans-serif;">kg/kmol</div>
<div style="left:457px;top:303px;width:94px;height:17px;line-height:18px;font-size:12.85px;color:#000;text-align:center;white-space:nowrap;font-family:'Liberation Sans','WenQuanYi Zen Hei',sans-serif;">m2/s</div>
<div style="left:457px;top:338px;width:94px;height:17px;line-height:18px;font-size:12.85px;color:#000;text-align:center;white-space:nowrap;font-family:'Liberation Sans','WenQuanYi Zen Hei',sans-serif;">m</div>
<div style="left:457px;top:355px;width:94px;height:17px;line-height:18px;font-size:12.85px;color:#000;text-align:center;white-space:nowrap;font-family:'Liberation Sans','WenQuanYi Zen Hei',sans-serif;">m/s</div>
<div style="left:457px;top:372px;width:94px;height:17px;line-height:18px;font-size:12.85px;color:#000;text-align:center;white-space:nowrap;font-family:'Liberation Sans','WenQuanYi Zen Hei',sans-serif;">m^2</div>
<div style="left:457px;top:406px;width:94px;height:17px;line-height:18px;font-size:12.85px;color:#000;text-align:center;white-space:nowrap;font-family:'Liberation Sans','WenQuanYi Zen Hei',sans-serif;">-</div>
<div style="left:457px;top:424px;width:94px;height:17px;line-height:18px;font-size:12.85px;color:#000;text-align:center;white-space:nowrap;font-family:'Liberation Sans','WenQuanYi Zen Hei',sans-serif;">KPa</div>
<div style="left:457px;top:441px;width:94px;height:17px;line-height:18px;font-size:12.85px;color:#000;text-align:center;white-space:nowrap;font-family:'Liberation Sans','WenQuanYi Zen Hei',sans-serif;">KPa</div>
<div style="left:457px;top:458px;width:94px;height:17px;line-height:18px;font-size:12.85px;color:#000;text-align:center;white-space:nowrap;font-family:'Liberation Sans','WenQuanYi Zen Hei',sans-serif;">C</div>
<div style="left:457px;top:476px;width:94px;height:17px;line-height:18px;font-size:12.85px;color:#000;text-align:center;white-space:nowrap;font-family:'Liberation Sans','WenQuanYi Zen Hei',sans-serif;">n/m</div>
<div style="left:457px;top:510px;width:94px;height:17px;line-height:18px;font-size:12.85px;color:#000;text-align:center;white-space:nowrap;font-family:'Liberation Sans','WenQuanYi Zen Hei',sans-serif;">kg/m^2/min</div>
<div style="left:457px;top:528px;width:94px;height:17px;line-height:18px;font-size:12.85px;color:#000;text-align:center;white-space:nowrap;font-family:'Liberation Sans','WenQuanYi Zen Hei',sans-serif;">kg/min</div>
<div style="left:457px;top:649px;width:94px;height:17px;line-height:18px;font-size:12.85px;color:#000;text-align:center;white-space:nowrap;font-family:'Liberation Sans','WenQuanYi Zen Hei',sans-serif;">gm/cm2 s</div>
<div style="left:457px;top:668px;width:94px;height:17px;line-height:18px;font-size:12.85px;color:#000;text-align:center;white-space:nowrap;font-family:'Liberation Sans','WenQuanYi Zen Hei',sans-serif;">gm/s</div>
<div style="left:357px;top:510px;width:91px;height:17px;line-height:18px;font-size:12.85px;color:#ff0000;text-align:right;white-space:nowrap;font-family:'Liberation Sans','WenQuanYi Zen Hei',sans-serif;font-weight:bold;">0.28724325026</div>
<div style="left:357px;top:528px;width:91px;height:17px;line-height:18px;font-size:12.85px;color:#ff0000;text-align:right;white-space:nowrap;font-family:'Liberation Sans','WenQuanYi Zen Hei',sans-serif;font-weight:bold;">2.8724325026</div>
<div style="left:32px;top:545px;width:519px;height:17px;line-height:18px;font-size:12.85px;color:#000;text-align:left;white-space:nowrap;font-family:'Liberation Mono','WenQuanYi Zen Hei',monospace;letter-spacing:-0.71px;"><span style="font-size:13px;letter-spacing:0px;font-family:'WenQuanYi Zen Hei',sans-serif;">常用参数</span></div>
<div style="left:32px;top:562px;width:519px;height:17px;line-height:18px;font-size:12.85px;color:#000;text-align:left;white-space:nowrap;font-family:'Liberation Mono','WenQuanYi Zen Hei',monospace;letter-spacing:-0.71px;"><span style="font-size:13px;letter-spacing:0px;font-family:'WenQuanYi Zen Hei',sans-serif;">大气压：</span> 101KPa</div>
<div style="left:32px;top:579px;width:519px;height:17px;line-height:18px;font-size:12.85px;color:#000;text-align:left;white-space:nowrap;font-family:'Liberation Mono','WenQuanYi Zen Hei',monospace;letter-spacing:-0.71px;"><span style="font-size:13px;letter-spacing:0px;font-family:'WenQuanYi Zen Hei',sans-serif;">空气粘度</span> 0.00193m2/s</div>
<div style="left:32px;top:596px;width:519px;height:17px;line-height:18px;font-size:12.85px;color:#000;text-align:left;white-space:nowrap;font-family:'Liberation Mono','WenQuanYi Zen Hei',monospace;letter-spacing:-0.71px;"><span style="font-size:13px;letter-spacing:0px;font-family:'WenQuanYi Zen Hei',sans-serif;">空气密度</span> 1294kg/m^3</div>
<div style="left:32px;top:613px;width:519px;height:17px;line-height:18px;font-size:12.85px;color:#000;text-align:left;white-space:nowrap;font-family:'Liberation Mono','WenQuanYi Zen Hei',monospace;letter-spacing:-0.71px;"><span style="font-size:13px;letter-spacing:0px;font-family:'WenQuanYi Zen Hei',sans-serif;">空气分子里</span> 29</div>
<div style="left:32px;top:631px;width:519px;height:17px;line-height:18px;font-size:12.85px;color:#000;text-align:left;white-space:nowrap;font-family:'Liberation Mono','WenQuanYi Zen Hei',monospace;letter-spacing:-0.71px;"><span style="font-size:13px;letter-spacing:0px;font-family:'WenQuanYi Zen Hei',sans-serif;">有机蒸气在空气中扩散系数：</span> 2.4753E-05m^2/s</div>
<div style="left:32px;top:649px;width:261px;height:17px;line-height:18px;font-size:12.85px;color:#000;text-align:left;white-space:nowrap;font-family:'Liberation Sans','WenQuanYi Zen Hei',sans-serif;">Evaporation Rate per Surface Area</div>
<div style="left:32px;top:668px;width:261px;height:17px;line-height:18px;font-size:12.85px;color:#000;text-align:left;white-space:nowrap;font-family:'Liberation Sans','WenQuanYi Zen Hei',sans-serif;">Evaporation Rate</div>
<div style="left:359px;top:649px;width:89px;height:17px;line-height:18px;font-size:12.85px;color:#000;text-align:right;white-space:nowrap;font-family:'Liberation Sans','WenQuanYi Zen Hei',sans-serif;font-weight:bold;">5.7449E-04</div>
<div style="left:359px;top:668px;width:93px;height:17px;line-height:18px;font-size:12.85px;color:#000;text-align:right;white-space:nowrap;font-family:'Liberation Sans','WenQuanYi Zen Hei',sans-serif;font-weight:bold;">0.0000E+00</div>
<div style="left:555px;top:649px;width:77px;height:17px;line-height:18px;font-size:12.85px;color:#000;text-align:center;white-space:nowrap;font-family:'Liberation Sans','WenQuanYi Zen Hei',sans-serif;">Eao</div>
<div style="left:636px;top:649px;width:72px;height:17px;line-height:18px;font-size:12.85px;color:#000;text-align:right;white-space:nowrap;font-family:'Liberation Sans','WenQuanYi Zen Hei',sans-serif;">1.1848E-04</div>
<div style="left:717px;top:649px;width:130px;height:17px;line-height:18px;font-size:12.85px;color:#000;text-align:left;white-space:nowrap;font-family:'Liberation Sans','WenQuanYi Zen Hei',sans-serif;">Initial Estimate</div>
<div style="left:555px;top:424px;width:292px;height:17px;line-height:18px;font-size:12.85px;color:#000;text-align:center;white-space:nowrap;font-family:'Liberation Sans','WenQuanYi Zen Hei',sans-serif;"><span style="font-size:13px;letter-spacing:0px;font-family:'WenQuanYi Zen Hei',sans-serif;">泄漏区域及风向示意图</span></div>
<div style="left:555px;top:458px;width:292px;height:17px;line-height:18px;font-size:12.85px;color:#000;text-align:center;white-space:nowrap;font-family:'Liberation Sans','WenQuanYi Zen Hei',sans-serif;font-weight:bold;"><span style="font-size:13px;letter-spacing:0px;font-family:'Noto Serif CJK SC',serif;font-weight:700;">使用说明</span></div>
<div style="left:556px;top:476px;width:291px;height:17px;line-height:18px;font-size:12.85px;color:#000;text-align:left;white-space:nowrap;font-family:'Liberation Sans','WenQuanYi Zen Hei',sans-serif;">1.<span style="font-size:13px;letter-spacing:0px;font-family:'WenQuanYi Zen Hei',sans-serif;">绿色区域为必填项，蓝色区域可使用默认值</span></div>
<div style="left:556px;top:493px;width:76px;height:17px;line-height:18px;font-size:12.85px;color:#ff0000;text-align:left;white-space:nowrap;font-family:'Liberation Sans','WenQuanYi Zen Hei',sans-serif;">2.<span style="font-size:13px;letter-spacing:0px;font-family:'WenQuanYi Zen Hei',sans-serif;">黄底红字</span></div>
<div style="left:637px;top:493px;width:210px;height:17px;line-height:18px;font-size:12.85px;color:#000;text-align:left;white-space:nowrap;font-family:'Liberation Sans','WenQuanYi Zen Hei',sans-serif;"><span style="font-size:13px;letter-spacing:0px;font-family:'WenQuanYi Zen Hei',sans-serif;">为输入值</span></div>
<div style="left:556px;top:510px;width:291px;height:17px;line-height:18px;font-size:12.85px;color:#000;text-align:left;white-space:nowrap;font-family:'Liberation Sans','WenQuanYi Zen Hei',sans-serif;">3.<span style="font-size:13px;letter-spacing:0px;font-family:'WenQuanYi Zen Hei',sans-serif;">输入完成后，单击<span style="display:inline-block;position:static;width:13px;text-align:right;letter-spacing:0">“</span>计算<span style="display:inline-block;position:static;width:13px;text-align:left;letter-spacing:0">”</span>按钮，程序自动计算</span></div>
<div style="left:556px;top:528px;width:291px;height:17px;line-height:18px;font-size:12.85px;color:#000;text-align:left;white-space:nowrap;font-family:'Liberation Sans','WenQuanYi Zen Hei',sans-serif;">4.<span style="font-size:13px;letter-spacing:0px;font-family:'WenQuanYi Zen Hei',sans-serif;">可使用</span>CHEMDATA_CC<span style="font-size:13px;letter-spacing:0px;font-family:'WenQuanYi Zen Hei',sans-serif;">中热力学数据进行计算</span></div>
<div style="left:556px;top:545px;width:291px;height:17px;line-height:18px;font-size:12.85px;color:#000;text-align:left;white-space:nowrap;font-family:'Liberation Sans','WenQuanYi Zen Hei',sans-serif;">5.<span style="font-size:13px;letter-spacing:0px;font-family:'WenQuanYi Zen Hei',sans-serif;">多组分要采用简单加和的方式处理</span></div>
<div style="left:355px;top:646px;width:101px;height:21px;border:3px solid #52a030;"></div>
<div style="left:453px;top:663px;width:7px;height:7px;background:#52a030;border:1px solid #fff;"></div>
<div style="left:362px;top:563px;width:90px;height:44px;border:1px solid #74747c;border-radius:3.500px;background:linear-gradient(#f5f5f5 0%,#ebebeb 47%,#dddddd 49%,#d3d3d3 100%);box-shadow:inset 0 0 0 1px #fafafa;"></div>
<div style="left:362px;top:562px;width:90px;height:44px;line-height:40px;font-size:16px;color:#ff0000;text-align:center;white-space:nowrap;font-family:'Liberation Sans','Noto Sans CJK SC',sans-serif;font-weight:bold;"><span style="font-family:'Noto Sans CJK SC',sans-serif;font-size:16px;letter-spacing:0.3px">计算</span><span style="font-family:'Liberation Serif',serif;font-size:18px">!</span></div>
<svg style="left:552px;top:164px" width="296" height="276" viewBox="552 164 296 276">
<g fill="none" stroke="#000" stroke-width="1.1" stroke-linejoin="round" stroke-linecap="round">
<path fill="#ccffcc" d="M587.3 260.2C584.6 259.8 592.2 259.8 595.6 261.3C599 262.8 602.5 264.2 602.7 266.9C602.9 269.6 598.1 270.6 596.5 273.5C594.9 276.4 597.3 277.7 595.6 280.2C593.9 282.7 591.8 282.5 588.8 285C585.8 287.5 583.8 289.3 582.1 291.7C580.4 294.1 582 292.4 581.2 295.8C580.4 299.2 579.2 303.1 578.3 307.3C577.4 311.5 577 310.8 577 315C577 319.2 576.5 321.4 578.3 326.5C580.1 331.6 582.7 333.6 585 338C587.3 342.4 583.3 341.8 588.8 346.7C594.3 351.6 604.9 357.6 610 360.2C615.1 362.8 610.3 358.1 612 358.5C613.7 358.9 613.1 359.3 617.7 362C622.3 364.7 628.6 367.8 633 370.8C637.4 373.8 633.7 373.1 637.9 375.6C642.1 378.1 646.6 380.1 652.3 382.3C658 384.5 660.1 385.5 663.8 385.8C667.5 386.1 666.4 383.9 669 383.5C671.6 383.1 671.4 383.3 675.4 384.2C679.4 385.1 681.6 386 687 387.7C692.4 389.4 696 390.7 700 392C704 393.3 703.1 392.8 705 393.8C706.9 394.8 705.8 394.6 708.8 396.7C711.8 398.8 714.3 401.9 718.5 403.5C722.7 405.1 727.8 403.4 728 403.8C728.2 404.2 719.2 403.4 719.4 405.4C719.6 407.4 725 410.2 729 413C733 415.8 732.6 416.8 737.7 417.9C742.8 419 746.6 419.4 752.1 417.9C757.6 416.4 757.6 414.4 762.7 411.2C767.8 408 773.3 407.7 775.2 403.5C777.1 399.3 769.4 396.4 771.3 392C773.2 387.6 781.7 388.6 783.8 383.3C785.9 378 779.1 373.2 781 367.9C782.9 362.6 790.8 363.2 792.5 359.2C794.2 355.2 789.3 353.8 788.7 349.6C788.1 345.4 787.7 344.2 789.6 340C791.5 335.8 797.3 336.7 797.3 330.4C797.3 324.1 790.2 318.2 789.6 311.2C789 304.2 794.4 302.8 794.4 298.7C794.4 294.6 791.1 296.1 789.6 292.7C788.1 289.3 789.4 288.8 787.7 283.1C786 277.4 784.8 271.4 782 266.7C779.2 262 778.6 265.5 775.2 261.9C771.8 258.3 770.1 255.5 766.5 250.4C762.9 245.3 763.9 242.8 758.8 238.8C753.7 234.8 749.4 234.8 743.5 232.1C737.6 229.3 737.1 228 732 226.3C726.9 224.6 726.3 224.2 720.4 224.4C714.5 224.6 709.7 226.2 705 227.3C700.3 228.4 702.6 228.7 699.2 229.2C695.8 229.7 692.8 229 689.6 229.6C686.4 230.2 686.9 230.3 684.8 232.1C682.7 233.9 682.1 235.8 680 237.9C677.9 240 677.4 239.8 675.4 241.7C673.4 243.6 673.5 245.9 671 246.5C668.5 247.1 666.4 245 664 244.5C661.6 244 663.4 244 660 244.2C656.6 244.4 653.6 244.7 648.5 245.6C643.4 246.5 642.9 245.6 637 248.5C631.1 251.4 627.9 255.8 621.5 259C615.1 262.2 615.5 262.6 608 262.9C600.5 263.2 590 260.6 587.3 260.2Z"/>
<path d="M576.5 178V344.5M798.5 171V362.5M577 188.5H798"/>
<path d="M654.6 259L656.2 273.5L655.2 281.2L647.5 287L647.5 292L649.4 306.3L654.2 308.3L658 314L658 320.8L656 325.6L648.8 325.6"/>
<path d="M706 229.2L705 249.4L698.3 262L696.3 273.5L699.2 285L704 287L708.5 299.6L695.4 315.6"/>
<path d="M760.8 321.7C761 328 768 330 765 336C762 341 757 342 759.5 347C761 351 761 353 759.2 356.3L763 352"/>
<path d="M731 359.2L725.2 369.8L722.7 371.7L725.2 376.5L734.8 380.4L735.8 385.2L731 388L725.6 388"/>
<path d="M666 382L672 380.5L666 384.5L671 386"/>
</g>
<g fill="#000">
<path d="M576.500 188.500L588 185.500V191.500ZM798.500 188.500L786 185.500V191.500Z"/>
<path d="M654.6 253L650.4 260H659ZM705 222.5L701 229.5H709ZM760.4 314L757 322H764ZM732.5 352L727.5 357.3L734.5 360ZM670.6 373L666.7 380.4H674.4Z"/>
</g>
<path d="M589.5 200H639.5V192.5L659 208.5L639.5 225V217H589.5Z" fill="#ffff00" stroke="#000" stroke-width="1"/>
<text x="674.5" y="177" font-family="Liberation Sans,sans-serif" font-size="13.33" text-anchor="middle" fill="#000">L</text>
<text x="665.5" y="212.5" font-family="Liberation Sans,sans-serif" font-size="13.33" fill="#000">Uo</text>
</svg>
<div style="left:1340px;top:148px;width:19px;height:533px;background:#c8c8c8;"></div>
<svg style="left:1343px;top:155px" width="12" height="2"><path d="M0 1H12" stroke="#8c8c8c" stroke-width="1.6"/></svg>
<svg style="left:1344px;top:168px" width="10" height="6"><path d="M0 5.500H10L5 0Z" fill="#555"/></svg>
<div style="left:1343px;top:185px;width:13px;height:160px;background:#f4f4f4;"></div>
<svg style="left:1345px;top:260px" width="8" height="9"><path d="M0 0.500H8M0 4.500H8M0 8.500H8" stroke="#8a8a8a" stroke-width="1"/></svg>
<svg style="left:1344px;top:669px" width="10" height="6"><path d="M0 0H10L5 5.500Z" fill="#555"/></svg>
<div style="left:1359px;top:122px;width:7px;height:584px;background:#dcdcde;"></div>
<div style="left:1359px;top:385px;width:7px;height:100px;background:#5aa632;"></div>
<svg style="left:1360px;top:432px" width="5" height="8"><path d="M4 0V7L0.500 3.500Z" fill="#fff"/></svg>
<div style="left:0px;top:681px;width:1366px;height:25px;background:#c8c8c8;"></div>
<div style="left:0px;top:681px;width:75px;height:25px;background:#cbcbcb;border-right:1px solid #bdbdbd;"></div>
<svg style="left:8px;top:687px" width="60" height="13" viewBox="0 0 60 13" fill="#a8a8a8">
<path d="M1 1.500H2.300V11.500H1ZM8.500 1.500V11.500L2.800 6.500Z"/><path d="M24 1.500V11.500L18 6.500Z"/><path d="M31 1.500V11.500L37 6.500Z"/><path d="M49 1.500V11.500L54.700 6.500ZM55.200 1.500H56.500V11.500H55.200Z"/></svg>
<div style="left:75px;top:681px;width:131px;height:25px;line-height:28px;font-size:12px;color:#444;text-align:center;white-space:nowrap;font-family:'Liberation Sans','Noto Sans CJK SC',sans-serif;">纯物质物性计算 (2)</div>
<div style="left:206px;top:681px;width:77px;height:25px;background:#fff;"></div>
<div style="left:206px;top:681px;width:77px;height:25px;line-height:28px;font-size:12px;color:#4a9a28;text-align:center;white-space:nowrap;font-family:'Liberation Sans','Noto Sans CJK SC',sans-serif;">计算模板</div>
<div style="left:283px;top:681px;width:64px;height:25px;line-height:28px;font-size:13px;color:#444;text-align:center;white-space:nowrap;font-family:'Liberation Sans','Noto Sans CJK SC',sans-serif;">Notes</div>
<div style="left:346px;top:684px;width:1px;height:20px;background:#b8b8b8;"></div>
<svg style="left:356px;top:691px" width="40" height="8"><path d="M0 1.500H4M6 1.500H10M12 1.500H16" stroke="#5aa632" stroke-width="2.600"/></svg>
<svg style="left:381px;top:687px" width="12" height="12"><path d="M6 0.500V11.500M0.500 6H11.500" stroke="#444" stroke-width="1.800"/></svg>
<div style="left:793px;top:687px;width:1px;height:13px;background:#8a8a8a;"></div>
<svg style="left:806px;top:688px" width="7" height="11"><path d="M6 0V10.500L0 5.200Z" fill="#555"/></svg>
<div style="left:823px;top:687px;width:463px;height:13px;background:#f4f4f4;"></div>
<svg style="left:1049px;top:689px" width="9" height="9"><path d="M0.500 0V9M4.500 0V9M8.500 0V9" stroke="#8a8a8a" stroke-width="1"/></svg>
<svg style="left:1312px;top:688px" width="7" height="11"><path d="M0.500 0V10.500L6.500 5.200Z" fill="#555"/></svg>
<div style="left:1332px;top:687px;width:1px;height:13px;background:#8a8a8a;"></div>
<div style="left:0px;top:706px;width:1366px;height:22px;background:#e2e2e4;"></div>
<svg style="left:131px;top:709px" width="16" height="16" viewBox="0 0 16 16" fill="none"><rect x="3.500" y="3.500" width="11" height="11" stroke="#777" stroke-width="1.200"/><path d="M3.500 6.500H14.500" stroke="#777"/><path d="M5.500 9H8M9.500 9H12.500M5.500 11.500H8M9.500 11.500H12.500" stroke="#888" stroke-width="1"/><circle cx="3" cy="3" r="2.600" fill="#e8573a"/></svg>
<div style="left:153px;top:706px;width:200px;height:22px;line-height:24px;font-size:12.6px;color:#444;text-align:left;white-space:nowrap;font-family:'Liberation Sans','Noto Sans CJK SC',sans-serif;">0.000574486500512</div>
<div style="left:985px;top:706px;width:37px;height:22px;background:#c1e2b4;"></div>
<svg style="left:990px;top:706px" width="376" height="22" viewBox="990 706 376 22" fill="none">
<rect x="996" y="709.500" width="15" height="14" rx="1" fill="#666"/><path d="M997 713.500H1010M997 719.500H1010M1000.500 710V723M1006.500 710V723" stroke="#c1e2b4" stroke-width="1"/><path d="M1000.500 714H1006.500V719H1000.500Z" fill="#666"/>
<rect x="1033" y="709.500" width="15" height="14" rx="1" fill="#666"/><path d="M1033 714H1048M1033 718.500H1048M1038 710V723M1043 710V723" stroke="#e2e2e4" stroke-width="1"/><path d="M1043.500 709V720H1033" stroke="#e2e2e4" stroke-width="1" stroke-dasharray="2 1"/>
<rect x="1070" y="709.500" width="15" height="14" rx="1" fill="#666"/><path d="M1071 718.500H1084M1080.500 714V723" stroke="#e2e2e4" stroke-width="1.600"/>
<path d="M1090.500 715.500H1096L1093.200 718.500Z" fill="#555"/>
<rect x="1111.500" y="709.500" width="14" height="14" rx="1" fill="#666"/><circle cx="1118.500" cy="715" r="2.800" fill="#e2e2e4"/><rect x="1117" y="717" width="3" height="3.500" fill="#e2e2e4"/>
<path d="M1131 715.500H1136.500L1133.700 718.500Z" fill="#555"/>
<path d="M1192 716.500H1202" stroke="#555" stroke-width="2"/>
<path d="M1210 716.500H1277" stroke="#5aa632" stroke-width="1.600"/><path d="M1277 716.500H1344" stroke="#8a8a8a" stroke-width="1.700"/>
<circle cx="1277" cy="716.500" r="6.500" fill="#f6f6f6" stroke="#777" stroke-width="1"/>
<path d="M1350 716.500H1360M1355 711.500V721.500" stroke="#444" stroke-width="2"/>
</svg>
<div style="left:1149px;top:706px;width:42px;height:22px;line-height:24px;font-size:12.6px;color:#444;text-align:left;white-space:nowrap;font-family:'Liberation Sans','Noto Sans CJK SC',sans-serif;">100 %</div>
</body></html>
